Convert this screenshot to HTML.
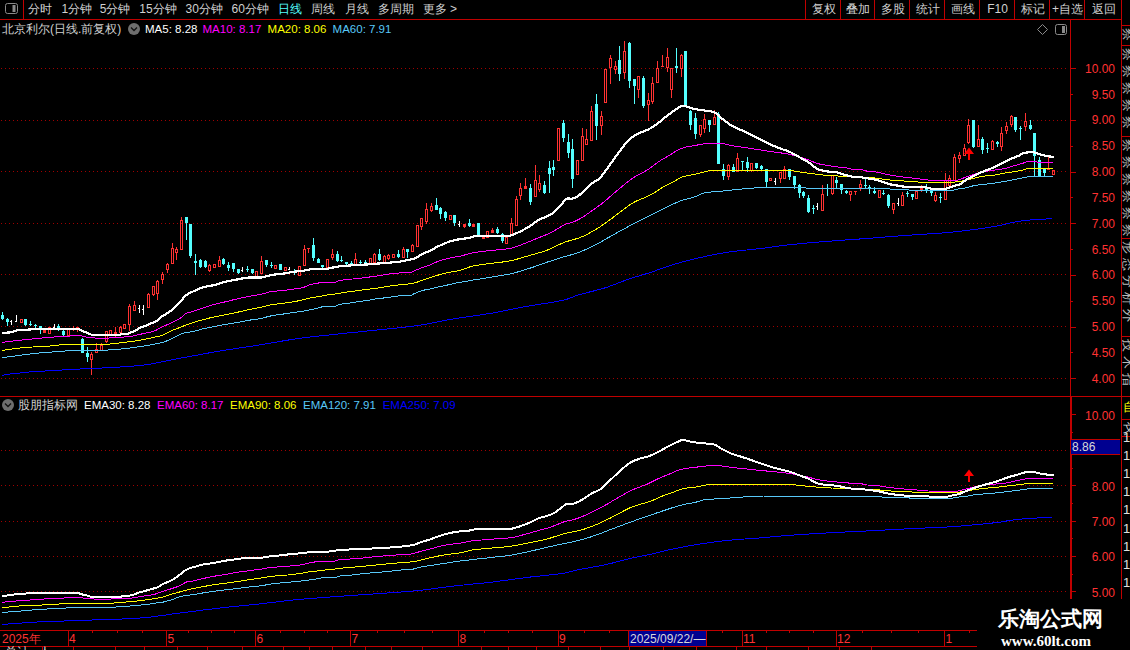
<!DOCTYPE html>
<html><head><meta charset="utf-8">
<style>
html,body{margin:0;padding:0;background:#000;}
body{width:1130px;height:650px;position:relative;overflow:hidden;font-family:"Liberation Sans",sans-serif;color:#d8d8d8;}
svg{position:absolute;left:0;top:0;}
.t{position:absolute;white-space:nowrap;font-size:12px;line-height:14px;}
.tb{position:absolute;top:2px;white-space:nowrap;font-size:12px;line-height:14px;color:#d0d0d0;}
.ax{position:absolute;right:15px;font-size:12px;line-height:12px;color:#ff3232;text-align:right;}
.xl{position:absolute;top:632px;font-size:12px;line-height:14px;color:#ff3232;}
</style></head>
<body>
<svg width="1130" height="650" viewBox="0 0 1130 650" shape-rendering="auto">
<g shape-rendering="crispEdges" fill="none" stroke="#c00000" stroke-width="1">
<path d="M0 19.5H1121M23.5 0V19M805.5 0V19M840.5 0V19M874.5 0V19M909.5 0V19M944.5 0V19M979.5 0V19M1014.5 0V19M1049.5 0V19M1084.5 0V19"/>
<path d="M1121.5 0V599M1070.5 19V599M0 396.5H1130M1071.5 397V599M628.5 631V646M706.5 631V646"/>
<path d="M1121 25.5H1130M1121 45.5H1130M1121 136.5H1130M1121 238.5H1130M1121 336.5H1130M1121 419.5H1130M1121 436.5H1130"/>
</g>
<path d="M1 68.5H1066" stroke="#a00000" stroke-dasharray="1 3"/>
<path d="M1 120.5H1066" stroke="#a00000" stroke-dasharray="1 3"/>
<path d="M1 171.5H1066" stroke="#a00000" stroke-dasharray="1 3"/>
<path d="M1 223.5H1066" stroke="#a00000" stroke-dasharray="1 3"/>
<path d="M1 274.5H1066" stroke="#a00000" stroke-dasharray="1 3"/>
<path d="M1 326.5H1066" stroke="#a00000" stroke-dasharray="1 3"/>
<path d="M1 378.5H1066" stroke="#a00000" stroke-dasharray="1 3"/>
<g stroke-width="1" shape-rendering="crispEdges"><path d="M2.5 312.0V320.0" stroke="#54ffff"/>
<rect x="1.0" y="314.5" width="3" height="4.0" fill="#54ffff"/>
<path d="M7.5 317.5V326.0" stroke="#54ffff"/>
<rect x="6.0" y="319.0" width="3" height="3.0" fill="#54ffff"/>
<path d="M11.5 320.0V325.0M10.0 321.5H11.5" stroke="#ffffff"/>
<path d="M16.5 315.0V322.0M15.0 321.5H16.5" stroke="#ffffff"/>
<path d="M21.5 319.0V319.0M21.5 322.0V323.0" stroke="#ff3232"/>
<rect x="20.5" y="319.0" width="2" height="3.0" fill="none" stroke="#ff3232"/>
<path d="M25.5 319.0V326.0" stroke="#54ffff"/>
<rect x="24.0" y="319.0" width="3" height="5.5" fill="#54ffff"/>
<path d="M30.5 321.0V326.0" stroke="#54ffff"/>
<rect x="29.0" y="323.5" width="3" height="1.0" fill="#54ffff"/>
<path d="M35.5 324.0V328.0" stroke="#54ffff"/>
<rect x="34.0" y="325.0" width="3" height="1.0" fill="#54ffff"/>
<path d="M40.5 326.0V333.5" stroke="#54ffff"/>
<rect x="39.0" y="326.0" width="3" height="3.0" fill="#54ffff"/>
<path d="M44.5 330.0V330.0M44.5 332.0V333.0" stroke="#ff3232"/>
<rect x="43.0" y="330.0" width="3" height="2.5" fill="#ff3232"/>

<rect x="48.5" y="327.0" width="2" height="6.0" fill="none" stroke="#ff3232"/>
<path d="M54.5 324.0V328.0M53.0 327.5H54.5" stroke="#ffffff"/>
<path d="M58.5 324.0V331.0" stroke="#54ffff"/>
<rect x="57.0" y="326.0" width="3" height="4.0" fill="#54ffff"/>
<path d="M63.5 329.7V336.0" stroke="#54ffff"/>
<rect x="62.0" y="330.6" width="3" height="4.6" fill="#54ffff"/>

<rect x="67.5" y="329.7" width="2" height="6.0" fill="none" stroke="#ff3232"/>
<path d="M73.5 326.0V328.5M73.5 329.5V331.0" stroke="#ff3232"/>
<path d="M72.0 329.0H75.0" stroke="#ff3232"/>
<path d="M77.5 326.5V327.4M77.5 329.2V331.5" stroke="#ff3232"/>
<rect x="76.0" y="327.4" width="3" height="2.3" fill="#ff3232"/>
<path d="M82.5 338.0V352.8" stroke="#54ffff"/>
<rect x="81.0" y="339.0" width="3" height="13.8" fill="#54ffff"/>
<path d="M87.5 346.8V362.0" stroke="#54ffff"/>
<rect x="86.0" y="352.8" width="3" height="4.2" fill="#54ffff"/>
<path d="M91.5 351.9V354.2M91.5 359.7V374.9" stroke="#ff3232"/>
<rect x="90.5" y="354.2" width="2" height="5.5" fill="none" stroke="#ff3232"/>
<path d="M96.5 343.0V349.0M96.5 352.8V352.8" stroke="#ff3232"/>
<rect x="95.5" y="349.0" width="2" height="3.8" fill="none" stroke="#ff3232"/>
<path d="M101.5 342.6V345.0M101.5 350.0V350.7" stroke="#ff3232"/>
<rect x="100.5" y="345.0" width="2" height="5.0" fill="none" stroke="#ff3232"/>
<path d="M106.5 331.0V331.0M106.5 341.5V343.0" stroke="#ff3232"/>
<rect x="105.5" y="331.0" width="2" height="10.5" fill="none" stroke="#ff3232"/>

<rect x="109.5" y="330.5" width="2" height="4.0" fill="none" stroke="#ff3232"/>
<path d="M115.5 327.0V332.0M115.5 334.5V337.0" stroke="#ff3232"/>
<rect x="114.0" y="332.0" width="3" height="3.0" fill="#ff3232"/>
<path d="M120.5 326.0V327.0M120.5 332.0V332.0" stroke="#ff3232"/>
<rect x="119.5" y="327.0" width="2" height="5.0" fill="none" stroke="#ff3232"/>

<rect x="123.5" y="324.6" width="2" height="3.4" fill="none" stroke="#ff3232"/>
<path d="M129.5 304.0V306.0M129.5 324.0V331.0" stroke="#ff3232"/>
<rect x="128.5" y="306.0" width="2" height="18.0" fill="none" stroke="#ff3232"/>
<path d="M134.5 301.0V305.7M134.5 310.3V311.0" stroke="#ff3232"/>
<rect x="133.5" y="305.7" width="2" height="4.6" fill="none" stroke="#ff3232"/>
<path d="M139.5 305.0V312.6M138.0 308.5H139.5" stroke="#ffffff"/>
<path d="M143.5 304.5V315.0M142.0 309.5H143.5" stroke="#ffffff"/>
<path d="M148.5 293.0V294.8M148.5 307.3V307.3" stroke="#ff3232"/>
<rect x="147.5" y="294.8" width="2" height="12.5" fill="none" stroke="#ff3232"/>
<path d="M153.5 285.6V286.8M153.5 294.8V295.7" stroke="#ff3232"/>
<rect x="152.5" y="286.8" width="2" height="8.0" fill="none" stroke="#ff3232"/>
<path d="M157.5 280.0V281.5M157.5 293.0V299.5" stroke="#ff3232"/>
<rect x="156.5" y="281.5" width="2" height="11.5" fill="none" stroke="#ff3232"/>
<path d="M162.5 272.0V274.0M162.5 279.0V284.0" stroke="#ff3232"/>
<rect x="161.5" y="274.0" width="2" height="5.0" fill="none" stroke="#ff3232"/>
<path d="M167.5 263.0V264.6M167.5 269.5V272.7" stroke="#ff3232"/>
<rect x="166.5" y="264.6" width="2" height="4.9" fill="none" stroke="#ff3232"/>
<path d="M172.5 243.0V248.0M172.5 263.0V263.0" stroke="#ff3232"/>
<rect x="171.5" y="248.0" width="2" height="15.0" fill="none" stroke="#ff3232"/>
<path d="M176.5 247.0V249.0M176.5 252.6V259.6" stroke="#ff3232"/>
<rect x="175.5" y="249.0" width="2" height="3.6" fill="none" stroke="#ff3232"/>
<path d="M181.5 217.0V220.4M181.5 249.0V249.0" stroke="#ff3232"/>
<rect x="180.5" y="220.4" width="2" height="28.6" fill="none" stroke="#ff3232"/>
<path d="M186.5 217.4V240.0" stroke="#54ffff"/>
<rect x="185.0" y="217.4" width="3" height="5.3" fill="#54ffff"/>
<path d="M190.5 224.0V258.0" stroke="#54ffff"/>
<rect x="189.0" y="224.0" width="3" height="32.0" fill="#54ffff"/>
<path d="M195.5 254.0V274.5" stroke="#54ffff"/>
<rect x="194.0" y="261.0" width="3" height="2.0" fill="#54ffff"/>
<path d="M200.5 259.0V267.6" stroke="#54ffff"/>
<rect x="199.0" y="260.0" width="3" height="7.0" fill="#54ffff"/>
<path d="M205.5 260.0V268.0" stroke="#54ffff"/>
<rect x="204.0" y="261.0" width="3" height="6.0" fill="#54ffff"/>
<path d="M209.5 264.0V265.0M209.5 270.0V272.0" stroke="#ff3232"/>
<rect x="208.5" y="265.0" width="2" height="5.0" fill="none" stroke="#ff3232"/>

<rect x="213.5" y="264.0" width="2" height="3.6" fill="none" stroke="#ff3232"/>
<path d="M219.5 256.0V260.0M219.5 266.0V267.0" stroke="#ff3232"/>
<rect x="218.5" y="260.0" width="2" height="6.0" fill="none" stroke="#ff3232"/>
<path d="M223.5 258.0V265.0" stroke="#54ffff"/>
<rect x="222.0" y="259.0" width="3" height="5.4" fill="#54ffff"/>
<path d="M228.5 262.0V271.0" stroke="#54ffff"/>
<rect x="227.0" y="265.0" width="3" height="3.0" fill="#54ffff"/>
<path d="M233.5 263.0V272.0" stroke="#54ffff"/>
<rect x="232.0" y="263.0" width="3" height="6.0" fill="#54ffff"/>
<path d="M238.5 269.0V274.0" stroke="#54ffff"/>
<rect x="237.0" y="269.0" width="3" height="4.0" fill="#54ffff"/>
<path d="M242.5 267.0V272.0M241.0 270.5H242.5" stroke="#ffffff"/>
<path d="M247.5 266.0V272.0" stroke="#54ffff"/>
<rect x="246.0" y="269.0" width="3" height="1.0" fill="#54ffff"/>
<path d="M252.5 269.0V274.0" stroke="#54ffff"/>
<rect x="251.0" y="269.0" width="3" height="4.0" fill="#54ffff"/>

<rect x="255.5" y="271.0" width="2" height="6.0" fill="none" stroke="#ff3232"/>
<path d="M261.5 256.0V261.0M261.5 273.0V273.0" stroke="#ff3232"/>
<rect x="260.5" y="261.0" width="2" height="12.0" fill="none" stroke="#ff3232"/>
<path d="M266.5 260.0V267.0" stroke="#54ffff"/>
<rect x="265.0" y="260.0" width="3" height="5.0" fill="#54ffff"/>
<path d="M271.5 262.0V268.0" stroke="#54ffff"/>
<rect x="270.0" y="264.5" width="3" height="1.0" fill="#54ffff"/>

<rect x="274.5" y="265.0" width="2" height="3.0" fill="none" stroke="#ff3232"/>
<path d="M280.5 264.0V270.0" stroke="#54ffff"/>
<rect x="279.0" y="264.0" width="3" height="6.0" fill="#54ffff"/>

<rect x="284.5" y="267.0" width="2" height="3.0" fill="none" stroke="#ff3232"/>
<path d="M289.5 267.0V270.0M288.0 269.5H289.5" stroke="#ffffff"/>
<path d="M294.5 269.0V275.0" stroke="#54ffff"/>
<rect x="293.0" y="270.5" width="3" height="1.0" fill="#54ffff"/>

<rect x="298.5" y="266.0" width="2" height="9.0" fill="none" stroke="#ff3232"/>
<path d="M304.5 245.0V249.0M304.5 265.0V266.0" stroke="#ff3232"/>
<rect x="303.5" y="249.0" width="2" height="16.0" fill="none" stroke="#ff3232"/>
<path d="M308.5 248.0V248.0M308.5 249.0V253.0" stroke="#ff3232"/>
<path d="M307.0 248.5H310.0" stroke="#ff3232"/>
<path d="M313.5 238.0V261.0" stroke="#54ffff"/>
<rect x="312.0" y="245.0" width="3" height="13.0" fill="#54ffff"/>
<path d="M318.5 258.0V263.0" stroke="#54ffff"/>
<rect x="317.0" y="258.7" width="3" height="4.3" fill="#54ffff"/>
<path d="M322.5 265.0V270.0" stroke="#54ffff"/>
<rect x="321.0" y="265.0" width="3" height="2.3" fill="#54ffff"/>

<rect x="326.5" y="259.3" width="2" height="8.0" fill="none" stroke="#ff3232"/>
<path d="M332.5 249.4V254.4M332.5 257.6V259.7" stroke="#ff3232"/>
<rect x="331.5" y="254.4" width="2" height="3.2" fill="none" stroke="#ff3232"/>
<path d="M337.5 251.0V262.0" stroke="#54ffff"/>
<rect x="336.0" y="254.4" width="3" height="6.4" fill="#54ffff"/>
<path d="M341.5 256.0V262.0" stroke="#54ffff"/>
<rect x="340.0" y="259.5" width="3" height="1.5" fill="#54ffff"/>
<path d="M346.5 261.5V265.0" stroke="#54ffff"/>
<rect x="345.0" y="261.5" width="3" height="2.5" fill="#54ffff"/>
<path d="M351.5 261.0V265.0" stroke="#54ffff"/>
<rect x="350.0" y="262.5" width="3" height="1.0" fill="#54ffff"/>
<path d="M355.5 253.0V259.7M355.5 264.7V264.7" stroke="#ff3232"/>
<rect x="354.5" y="259.7" width="2" height="5.0" fill="none" stroke="#ff3232"/>
<path d="M360.5 259.7V264.0" stroke="#54ffff"/>
<rect x="359.0" y="261.5" width="3" height="1.0" fill="#54ffff"/>
<path d="M365.5 260.0V264.0" stroke="#54ffff"/>
<rect x="364.0" y="262.0" width="3" height="1.0" fill="#54ffff"/>

<rect x="369.5" y="258.7" width="2" height="4.3" fill="none" stroke="#ff3232"/>
<path d="M374.5 253.3V254.4M374.5 262.0V262.0" stroke="#ff3232"/>
<rect x="373.5" y="254.4" width="2" height="7.6" fill="none" stroke="#ff3232"/>
<path d="M379.5 249.0V261.0" stroke="#54ffff"/>
<rect x="378.0" y="254.4" width="3" height="5.3" fill="#54ffff"/>
<path d="M384.5 255.4V256.5M384.5 262.0V263.0" stroke="#ff3232"/>
<rect x="383.5" y="256.5" width="2" height="5.5" fill="none" stroke="#ff3232"/>
<path d="M388.5 254.4V255.4M388.5 258.7V259.7" stroke="#ff3232"/>
<rect x="387.5" y="255.4" width="2" height="3.3" fill="none" stroke="#ff3232"/>

<rect x="392.5" y="254.0" width="2" height="3.6" fill="none" stroke="#ff3232"/>
<path d="M398.5 250.0V257.6" stroke="#54ffff"/>
<rect x="397.0" y="254.4" width="3" height="2.1" fill="#54ffff"/>
<path d="M403.5 246.8V249.0M403.5 257.0V257.6" stroke="#ff3232"/>
<rect x="402.5" y="249.0" width="2" height="8.0" fill="none" stroke="#ff3232"/>
<path d="M407.5 248.5V257.6" stroke="#54ffff"/>
<rect x="406.0" y="248.5" width="3" height="3.7" fill="#54ffff"/>
<path d="M412.5 243.6V245.0M412.5 251.6V252.2" stroke="#ff3232"/>
<rect x="411.5" y="245.0" width="2" height="6.6" fill="none" stroke="#ff3232"/>

<rect x="416.5" y="225.7" width="2" height="21.1" fill="none" stroke="#ff3232"/>
<path d="M421.5 217.7V218.8M421.5 226.3V229.6" stroke="#ff3232"/>
<rect x="420.5" y="218.8" width="2" height="7.5" fill="none" stroke="#ff3232"/>
<path d="M426.5 202.6V209.0M426.5 221.0V224.0" stroke="#ff3232"/>
<rect x="425.5" y="209.0" width="2" height="12.0" fill="none" stroke="#ff3232"/>
<path d="M431.5 203.0V206.0M431.5 210.0V212.0" stroke="#ff3232"/>
<rect x="430.5" y="206.0" width="2" height="4.0" fill="none" stroke="#ff3232"/>
<path d="M436.5 198.0V210.0" stroke="#54ffff"/>
<rect x="435.0" y="205.0" width="3" height="5.0" fill="#54ffff"/>
<path d="M440.5 207.0V219.0" stroke="#54ffff"/>
<rect x="439.0" y="208.0" width="3" height="5.6" fill="#54ffff"/>
<path d="M445.5 211.0V221.0" stroke="#54ffff"/>
<rect x="444.0" y="212.4" width="3" height="5.6" fill="#54ffff"/>

<rect x="449.5" y="215.6" width="2" height="3.4" fill="none" stroke="#ff3232"/>
<path d="M454.5 215.0V226.0" stroke="#54ffff"/>
<rect x="453.0" y="215.0" width="3" height="8.0" fill="#54ffff"/>
<path d="M459.5 221.0V227.0M458.0 224.5H459.5" stroke="#ffffff"/>
<path d="M464.5 224.0V224.0M464.5 226.0V228.0" stroke="#ff3232"/>
<rect x="463.0" y="224.0" width="3" height="2.5" fill="#ff3232"/>
<path d="M469.5 219.0V227.0" stroke="#54ffff"/>
<rect x="468.0" y="223.0" width="3" height="3.0" fill="#54ffff"/>

<rect x="472.0" y="224.0" width="3" height="3.1" fill="#ff3232"/>
<path d="M478.5 223.0V235.0" stroke="#54ffff"/>
<rect x="477.0" y="223.0" width="3" height="12.0" fill="#54ffff"/>

<rect x="482.0" y="236.0" width="3" height="2.5" fill="#ff3232"/>

<rect x="486.5" y="231.0" width="2" height="6.0" fill="none" stroke="#ff3232"/>
<path d="M492.5 228.0V230.0M492.5 232.0V232.0" stroke="#ff3232"/>
<rect x="491.0" y="230.0" width="3" height="2.5" fill="#ff3232"/>
<path d="M497.5 227.0V234.0" stroke="#54ffff"/>
<rect x="496.0" y="229.0" width="3" height="4.0" fill="#54ffff"/>
<path d="M502.5 233.0V243.0" stroke="#54ffff"/>
<rect x="501.0" y="234.0" width="3" height="7.0" fill="#54ffff"/>

<rect x="505.5" y="237.0" width="2" height="6.0" fill="none" stroke="#ff3232"/>
<path d="M511.5 218.0V223.0M511.5 234.0V234.0" stroke="#ff3232"/>
<rect x="510.5" y="223.0" width="2" height="11.0" fill="none" stroke="#ff3232"/>
<path d="M516.5 196.0V199.0M516.5 225.0V226.0" stroke="#ff3232"/>
<rect x="515.5" y="199.0" width="2" height="26.0" fill="none" stroke="#ff3232"/>
<path d="M520.5 183.0V188.0M520.5 195.0V200.0" stroke="#ff3232"/>
<rect x="519.5" y="188.0" width="2" height="7.0" fill="none" stroke="#ff3232"/>
<path d="M525.5 178.0V186.0M525.5 188.4V188.4" stroke="#ff3232"/>
<rect x="524.0" y="186.0" width="3" height="2.9" fill="#ff3232"/>
<path d="M530.5 184.0V205.0" stroke="#54ffff"/>
<rect x="529.0" y="188.0" width="3" height="14.0" fill="#54ffff"/>
<path d="M535.5 165.0V180.0M535.5 196.0V196.0" stroke="#ff3232"/>
<rect x="534.5" y="180.0" width="2" height="16.0" fill="none" stroke="#ff3232"/>
<path d="M539.5 175.0V183.0M539.5 189.0V192.0" stroke="#ff3232"/>
<rect x="538.5" y="183.0" width="2" height="6.0" fill="none" stroke="#ff3232"/>
<path d="M544.5 181.0V194.0" stroke="#54ffff"/>
<rect x="543.0" y="185.0" width="3" height="8.0" fill="#54ffff"/>
<path d="M549.5 161.0V193.0" stroke="#54ffff"/>
<rect x="548.0" y="168.0" width="3" height="6.0" fill="#54ffff"/>
<path d="M553.5 160.0V176.0" stroke="#54ffff"/>
<rect x="552.0" y="167.0" width="3" height="3.0" fill="#54ffff"/>

<rect x="557.5" y="128.0" width="2" height="32.0" fill="none" stroke="#ff3232"/>
<path d="M563.5 120.0V142.0" stroke="#54ffff"/>
<rect x="562.0" y="123.0" width="3" height="15.0" fill="#54ffff"/>
<path d="M568.5 134.0V158.0" stroke="#54ffff"/>
<rect x="567.0" y="142.0" width="3" height="11.0" fill="#54ffff"/>
<path d="M572.5 139.0V188.0" stroke="#54ffff"/>
<rect x="571.0" y="149.0" width="3" height="30.0" fill="#54ffff"/>
<path d="M577.5 160.0V160.0M577.5 174.0V175.0" stroke="#ff3232"/>
<rect x="576.5" y="160.0" width="2" height="14.0" fill="none" stroke="#ff3232"/>
<path d="M582.5 128.0V136.0M582.5 160.0V160.0" stroke="#ff3232"/>
<rect x="581.5" y="136.0" width="2" height="24.0" fill="none" stroke="#ff3232"/>
<path d="M586.5 129.0V139.0M586.5 144.0V145.0" stroke="#ff3232"/>
<rect x="585.5" y="139.0" width="2" height="5.0" fill="none" stroke="#ff3232"/>
<path d="M591.5 106.0V111.0M591.5 140.0V140.0" stroke="#ff3232"/>
<rect x="590.5" y="111.0" width="2" height="29.0" fill="none" stroke="#ff3232"/>
<path d="M596.5 94.0V140.0" stroke="#54ffff"/>
<rect x="595.0" y="104.0" width="3" height="22.4" fill="#54ffff"/>
<path d="M601.5 111.0V116.0M601.5 125.6V135.0" stroke="#ff3232"/>
<rect x="600.5" y="116.0" width="2" height="9.6" fill="none" stroke="#ff3232"/>

<rect x="604.5" y="69.0" width="2" height="33.7" fill="none" stroke="#ff3232"/>
<path d="M610.5 55.0V58.7M610.5 67.0V84.0" stroke="#ff3232"/>
<rect x="609.5" y="58.7" width="2" height="8.3" fill="none" stroke="#ff3232"/>
<path d="M615.5 61.0V66.0M615.5 69.0V74.0" stroke="#ff3232"/>
<rect x="614.5" y="66.0" width="2" height="3.0" fill="none" stroke="#ff3232"/>
<path d="M619.5 46.0V80.7" stroke="#54ffff"/>
<rect x="618.0" y="60.0" width="3" height="14.0" fill="#54ffff"/>
<path d="M624.5 41.0V51.0M624.5 72.0V79.0" stroke="#ff3232"/>
<rect x="623.5" y="51.0" width="2" height="21.0" fill="none" stroke="#ff3232"/>
<path d="M629.5 41.8V87.5" stroke="#54ffff"/>
<rect x="628.0" y="42.6" width="3" height="38.1" fill="#54ffff"/>
<path d="M634.5 79.0V104.4" stroke="#54ffff"/>
<rect x="633.0" y="79.0" width="3" height="6.8" fill="#54ffff"/>
<path d="M638.5 76.5V76.5M638.5 89.0V97.6" stroke="#ff3232"/>
<rect x="637.5" y="76.5" width="2" height="12.5" fill="none" stroke="#ff3232"/>
<path d="M643.5 75.6V107.8" stroke="#54ffff"/>
<rect x="642.0" y="78.0" width="3" height="28.0" fill="#54ffff"/>
<path d="M648.5 93.4V100.0M648.5 104.4V120.5" stroke="#ff3232"/>
<rect x="647.5" y="100.0" width="2" height="4.4" fill="none" stroke="#ff3232"/>
<path d="M652.5 77.0V83.0M652.5 101.0V103.6" stroke="#ff3232"/>
<rect x="651.5" y="83.0" width="2" height="18.0" fill="none" stroke="#ff3232"/>
<path d="M657.5 61.0V68.0M657.5 82.4V82.4" stroke="#ff3232"/>
<rect x="656.5" y="68.0" width="2" height="14.4" fill="none" stroke="#ff3232"/>
<path d="M662.5 55.0V65.5M662.5 66.5V66.5" stroke="#ff3232"/>
<path d="M661.0 66.0H664.0" stroke="#ff3232"/>
<path d="M667.5 47.7V57.8M667.5 67.0V72.0" stroke="#ff3232"/>
<rect x="666.5" y="57.8" width="2" height="9.2" fill="none" stroke="#ff3232"/>
<path d="M671.5 68.0V68.8M671.5 89.0V97.6" stroke="#ff3232"/>
<rect x="670.5" y="68.8" width="2" height="20.2" fill="none" stroke="#ff3232"/>
<path d="M676.5 47.7V73.0" stroke="#54ffff"/>
<rect x="675.0" y="65.5" width="3" height="2.5" fill="#54ffff"/>
<path d="M681.5 53.6V55.0M681.5 68.0V77.3" stroke="#ff3232"/>
<rect x="680.5" y="55.0" width="2" height="13.0" fill="none" stroke="#ff3232"/>
<path d="M685.5 51.0V105.2" stroke="#54ffff"/>
<rect x="684.0" y="51.0" width="3" height="54.2" fill="#54ffff"/>
<path d="M690.5 109.5V130.0" stroke="#54ffff"/>
<rect x="689.0" y="110.7" width="3" height="14.3" fill="#54ffff"/>
<path d="M695.5 113.0V139.0" stroke="#54ffff"/>
<rect x="694.0" y="118.0" width="3" height="15.7" fill="#54ffff"/>
<path d="M700.5 124.7V125.4M700.5 134.7V137.4" stroke="#ff3232"/>
<rect x="699.5" y="125.4" width="2" height="9.3" fill="none" stroke="#ff3232"/>
<path d="M704.5 113.5V119.0M704.5 128.2V132.8" stroke="#ff3232"/>
<rect x="703.5" y="119.0" width="2" height="9.2" fill="none" stroke="#ff3232"/>
<path d="M709.5 120.0V131.9" stroke="#54ffff"/>
<rect x="708.0" y="120.0" width="3" height="5.4" fill="#54ffff"/>
<path d="M714.5 110.0V117.0M714.5 124.5V124.5" stroke="#ff3232"/>
<rect x="713.5" y="117.0" width="2" height="7.5" fill="none" stroke="#ff3232"/>
<path d="M718.5 112.0V164.2" stroke="#54ffff"/>
<rect x="717.0" y="113.5" width="3" height="50.7" fill="#54ffff"/>
<path d="M723.5 164.2V180.0" stroke="#54ffff"/>
<rect x="722.0" y="168.8" width="3" height="7.4" fill="#54ffff"/>
<path d="M728.5 164.0V165.0M728.5 176.2V180.0" stroke="#ff3232"/>
<rect x="727.5" y="165.0" width="2" height="11.2" fill="none" stroke="#ff3232"/>
<path d="M733.5 164.0V172.0" stroke="#54ffff"/>
<rect x="732.0" y="167.0" width="3" height="4.6" fill="#54ffff"/>
<path d="M737.5 153.0V158.7M737.5 171.6V171.6" stroke="#ff3232"/>
<rect x="736.5" y="158.7" width="2" height="12.9" fill="none" stroke="#ff3232"/>
<path d="M742.5 160.5V169.7" stroke="#54ffff"/>
<rect x="741.0" y="160.5" width="3" height="1.0" fill="#54ffff"/>
<path d="M747.5 156.8V171.6" stroke="#54ffff"/>
<rect x="746.0" y="162.3" width="3" height="5.6" fill="#54ffff"/>
<path d="M751.5 162.5V163.3M751.5 170.6V172.0" stroke="#ff3232"/>
<rect x="750.5" y="163.3" width="2" height="7.3" fill="none" stroke="#ff3232"/>
<path d="M756.5 163.0V169.0" stroke="#54ffff"/>
<rect x="755.0" y="163.3" width="3" height="4.6" fill="#54ffff"/>
<path d="M761.5 165.0V170.0" stroke="#54ffff"/>
<rect x="760.0" y="166.0" width="3" height="2.8" fill="#54ffff"/>
<path d="M766.5 168.8V188.0" stroke="#54ffff"/>
<rect x="765.0" y="168.8" width="3" height="12.9" fill="#54ffff"/>

<rect x="769.5" y="178.0" width="2" height="2.8" fill="none" stroke="#ff3232"/>
<path d="M775.5 178.0V185.4M774.0 181.5H775.5" stroke="#ffffff"/>
<path d="M780.5 172.0V172.5M780.5 178.0V183.0" stroke="#ff3232"/>
<rect x="779.5" y="172.5" width="2" height="5.5" fill="none" stroke="#ff3232"/>
<path d="M784.5 166.0V169.7M784.5 178.0V178.0" stroke="#ff3232"/>
<rect x="783.5" y="169.7" width="2" height="8.3" fill="none" stroke="#ff3232"/>
<path d="M789.5 168.8V180.0" stroke="#54ffff"/>
<rect x="788.0" y="168.8" width="3" height="8.2" fill="#54ffff"/>
<path d="M794.5 176.0V189.0" stroke="#54ffff"/>
<rect x="793.0" y="176.2" width="3" height="8.3" fill="#54ffff"/>
<path d="M799.5 184.0V198.0" stroke="#54ffff"/>
<rect x="798.0" y="184.5" width="3" height="8.3" fill="#54ffff"/>
<path d="M803.5 191.0V198.0" stroke="#54ffff"/>
<rect x="802.0" y="192.0" width="3" height="4.0" fill="#54ffff"/>
<path d="M808.5 195.0V213.0" stroke="#54ffff"/>
<rect x="807.0" y="198.0" width="3" height="14.0" fill="#54ffff"/>
<path d="M813.5 205.0V214.0" stroke="#54ffff"/>
<rect x="812.0" y="207.5" width="3" height="1.0" fill="#54ffff"/>
<path d="M817.5 203.0V210.0M816.0 206.5H817.5" stroke="#ffffff"/>
<path d="M822.5 184.6V194.0M822.5 210.0V210.0" stroke="#ff3232"/>
<rect x="821.5" y="194.0" width="2" height="16.0" fill="none" stroke="#ff3232"/>
<path d="M827.5 184.0V196.0" stroke="#54ffff"/>
<rect x="826.0" y="188.0" width="3" height="1.0" fill="#54ffff"/>
<path d="M832.5 175.4V175.4M832.5 193.0V194.6" stroke="#ff3232"/>
<rect x="831.5" y="175.4" width="2" height="17.6" fill="none" stroke="#ff3232"/>
<path d="M836.5 177.0V189.0" stroke="#54ffff"/>
<rect x="835.0" y="180.0" width="3" height="3.0" fill="#54ffff"/>
<path d="M841.5 184.0V194.0" stroke="#54ffff"/>
<rect x="840.0" y="184.0" width="3" height="6.0" fill="#54ffff"/>
<path d="M846.5 189.5V193.5" stroke="#54ffff"/>
<rect x="845.0" y="191.0" width="3" height="2.0" fill="#54ffff"/>
<path d="M850.5 191.0V191.0M850.5 194.0V201.0" stroke="#ff3232"/>
<rect x="849.5" y="191.0" width="2" height="3.0" fill="none" stroke="#ff3232"/>
<path d="M855.5 190.5V190.5M855.5 191.5V194.6" stroke="#ff3232"/>
<path d="M854.0 191.0H857.0" stroke="#ff3232"/>
<path d="M860.5 180.0V184.6M860.5 187.7V191.0" stroke="#ff3232"/>
<rect x="859.5" y="184.6" width="2" height="3.1" fill="none" stroke="#ff3232"/>
<path d="M865.5 178.5V187.7" stroke="#54ffff"/>
<rect x="864.0" y="185.0" width="3" height="1.0" fill="#54ffff"/>
<path d="M869.5 184.6V194.0" stroke="#54ffff"/>
<rect x="868.0" y="187.0" width="3" height="1.0" fill="#54ffff"/>
<path d="M874.5 187.0V194.0" stroke="#54ffff"/>
<rect x="873.0" y="191.0" width="3" height="2.0" fill="#54ffff"/>

<rect x="878.5" y="190.0" width="2" height="7.0" fill="none" stroke="#ff3232"/>
<path d="M883.5 190.0V195.4" stroke="#54ffff"/>
<rect x="882.0" y="192.5" width="3" height="1.0" fill="#54ffff"/>
<path d="M888.5 194.0V207.7" stroke="#54ffff"/>
<rect x="887.0" y="194.6" width="3" height="11.4" fill="#54ffff"/>
<path d="M893.5 203.0V203.5M893.5 209.0V214.0" stroke="#ff3232"/>
<rect x="892.5" y="203.5" width="2" height="5.5" fill="none" stroke="#ff3232"/>
<path d="M898.5 197.7V206.0M897.0 203.5H898.5" stroke="#ffffff"/>
<path d="M902.5 192.0V195.0M902.5 205.4V205.4" stroke="#ff3232"/>
<rect x="901.5" y="195.0" width="2" height="10.4" fill="none" stroke="#ff3232"/>
<path d="M907.5 191.0V197.0" stroke="#54ffff"/>
<rect x="906.0" y="192.5" width="3" height="1.0" fill="#54ffff"/>
<path d="M912.5 194.0V200.0" stroke="#54ffff"/>
<rect x="911.0" y="194.0" width="3" height="3.0" fill="#54ffff"/>

<rect x="915.5" y="191.0" width="2" height="7.5" fill="none" stroke="#ff3232"/>
<path d="M921.5 184.6V187.7M921.5 190.0V191.5" stroke="#ff3232"/>
<rect x="920.0" y="187.7" width="3" height="2.8" fill="#ff3232"/>
<path d="M926.5 184.0V193.0" stroke="#54ffff"/>
<rect x="925.0" y="187.7" width="3" height="3.1" fill="#54ffff"/>
<path d="M931.5 189.0V196.0" stroke="#54ffff"/>
<rect x="930.0" y="189.0" width="3" height="4.0" fill="#54ffff"/>
<path d="M935.5 192.0V195.4M935.5 200.0V201.5" stroke="#ff3232"/>
<rect x="934.5" y="195.4" width="2" height="4.6" fill="none" stroke="#ff3232"/>
<path d="M940.5 193.0V203.0" stroke="#54ffff"/>
<rect x="939.0" y="196.5" width="3" height="1.0" fill="#54ffff"/>
<path d="M945.5 172.7V180.4M945.5 199.6V199.6" stroke="#ff3232"/>
<rect x="944.5" y="180.4" width="2" height="19.2" fill="none" stroke="#ff3232"/>
<path d="M949.5 175.0V178.0M949.5 185.8V185.8" stroke="#ff3232"/>
<rect x="948.5" y="178.0" width="2" height="7.8" fill="none" stroke="#ff3232"/>
<path d="M954.5 153.5V157.3M954.5 180.4V180.4" stroke="#ff3232"/>
<rect x="953.5" y="157.3" width="2" height="23.1" fill="none" stroke="#ff3232"/>
<path d="M959.5 152.0V155.8M959.5 158.8V162.7" stroke="#ff3232"/>
<rect x="958.5" y="155.8" width="2" height="3.0" fill="none" stroke="#ff3232"/>
<path d="M964.5 144.0V148.0M964.5 155.0V155.0" stroke="#ff3232"/>
<rect x="963.5" y="148.0" width="2" height="7.0" fill="none" stroke="#ff3232"/>
<path d="M968.5 118.8V125.0M968.5 142.0V143.5" stroke="#ff3232"/>
<rect x="967.5" y="125.0" width="2" height="17.0" fill="none" stroke="#ff3232"/>
<path d="M973.5 120.0V148.0" stroke="#54ffff"/>
<rect x="972.0" y="120.0" width="3" height="26.5" fill="#54ffff"/>
<path d="M978.5 125.0V139.0M978.5 146.5V146.5" stroke="#ff3232"/>
<rect x="977.5" y="139.0" width="2" height="7.5" fill="none" stroke="#ff3232"/>
<path d="M982.5 137.0V154.2" stroke="#54ffff"/>
<rect x="981.0" y="138.5" width="3" height="11.1" fill="#54ffff"/>
<path d="M987.5 142.7V152.7" stroke="#54ffff"/>
<rect x="986.0" y="147.5" width="3" height="1.0" fill="#54ffff"/>
<path d="M992.5 139.6V141.0M992.5 149.0V149.6" stroke="#ff3232"/>
<rect x="991.5" y="141.0" width="2" height="8.0" fill="none" stroke="#ff3232"/>
<path d="M997.5 141.0V147.3" stroke="#54ffff"/>
<rect x="996.0" y="142.0" width="3" height="1.5" fill="#54ffff"/>
<path d="M1001.5 127.0V133.0M1001.5 146.5V151.0" stroke="#ff3232"/>
<rect x="1000.5" y="133.0" width="2" height="13.5" fill="none" stroke="#ff3232"/>
<path d="M1006.5 122.0V126.0M1006.5 130.4V133.5" stroke="#ff3232"/>
<rect x="1005.5" y="126.0" width="2" height="4.4" fill="none" stroke="#ff3232"/>
<path d="M1011.5 115.0V116.5M1011.5 124.7V127.0" stroke="#ff3232"/>
<rect x="1010.5" y="116.5" width="2" height="8.2" fill="none" stroke="#ff3232"/>
<path d="M1015.5 117.0V132.0" stroke="#54ffff"/>
<rect x="1014.0" y="117.0" width="3" height="12.6" fill="#54ffff"/>
<path d="M1020.5 125.8V139.6" stroke="#54ffff"/>
<rect x="1019.0" y="127.5" width="3" height="1.0" fill="#54ffff"/>
<path d="M1025.5 112.7V121.0M1025.5 126.5V131.0" stroke="#ff3232"/>
<rect x="1024.5" y="121.0" width="2" height="5.5" fill="none" stroke="#ff3232"/>
<path d="M1030.5 120.4V130.4" stroke="#54ffff"/>
<rect x="1029.0" y="125.0" width="3" height="3.8" fill="#54ffff"/>
<path d="M1034.5 132.7V175.8" stroke="#54ffff"/>
<rect x="1033.0" y="132.7" width="3" height="23.1" fill="#54ffff"/>
<path d="M1039.5 157.3V175.8" stroke="#54ffff"/>
<rect x="1038.0" y="159.6" width="3" height="16.2" fill="#54ffff"/>
<path d="M1044.5 168.0V177.3" stroke="#54ffff"/>
<rect x="1043.0" y="168.8" width="3" height="3.9" fill="#54ffff"/>
<path d="M1048.5 157.3V168.5M1048.5 169.6V169.6" stroke="#ff3232"/>
<path d="M1047.0 169.0H1050.0" stroke="#ff3232"/>

<rect x="1052.5" y="170.8" width="2" height="3.4" fill="none" stroke="#ff3232"/></g>
<path d="M2.0 375.5 L4.0 375.1 L6.0 374.7 L8.0 374.3 L10.0 374.0 L12.0 373.8 L14.0 373.6 L16.0 373.4 L18.0 373.2 L20.0 373.0 L21.9 372.8 L23.8 372.6 L25.6 372.4 L27.5 372.2 L29.4 372.0 L31.2 371.8 L33.1 371.6 L35.0 371.5 L37.0 371.4 L39.0 371.3 L41.0 371.2 L43.0 371.1 L45.0 371.0 L47.0 370.9 L49.0 370.8 L51.0 370.7 L53.0 370.6 L55.0 370.5 L56.9 370.4 L58.8 370.3 L60.6 370.1 L62.5 370.0 L64.4 369.9 L66.2 369.7 L68.1 369.6 L70.0 369.5 L72.0 369.4 L74.0 369.3 L76.0 369.2 L78.0 369.1 L80.0 369.0 L82.0 368.9 L84.0 368.8 L86.0 368.7 L88.0 368.6 L90.0 368.5 L92.0 368.4 L94.0 368.3 L96.0 368.3 L98.0 368.2 L100.0 368.1 L102.0 368.0 L104.0 367.9 L106.0 367.8 L108.0 367.7 L110.0 367.6 L111.9 367.5 L113.9 367.4 L115.9 367.3 L117.9 367.2 L119.9 367.0 L121.9 366.9 L123.9 366.8 L125.9 366.6 L127.9 366.5 L129.9 366.4 L131.8 366.2 L133.8 366.0 L135.8 365.9 L137.8 365.7 L139.8 365.5 L141.8 365.3 L143.8 365.1 L145.8 364.8 L147.8 364.5 L149.8 364.2 L151.7 363.8 L153.7 363.5 L155.7 363.1 L157.7 362.7 L159.7 362.3 L161.7 361.9 L163.7 361.5 L165.7 361.1 L167.7 360.7 L169.7 360.3 L171.6 359.8 L173.6 359.4 L175.6 359.0 L177.6 358.7 L179.6 358.3 L181.6 357.9 L183.6 357.6 L185.6 357.2 L187.6 356.8 L189.6 356.5 L191.6 356.1 L193.6 355.7 L195.6 355.4 L197.6 355.0 L199.6 354.6 L201.5 354.3 L203.5 353.9 L205.5 353.5 L207.5 353.2 L209.5 352.8 L211.5 352.5 L213.5 352.1 L215.5 351.8 L217.5 351.4 L219.5 351.1 L221.5 350.8 L223.5 350.5 L225.5 350.1 L227.5 349.8 L229.4 349.5 L231.4 349.2 L233.4 348.9 L235.4 348.6 L237.4 348.3 L239.4 348.0 L241.4 347.7 L243.4 347.4 L245.4 347.1 L247.4 346.8 L249.4 346.5 L251.3 346.2 L253.3 345.9 L255.3 345.6 L257.3 345.3 L259.3 345.0 L261.3 344.7 L263.3 344.3 L265.3 344.0 L267.3 343.7 L269.2 343.3 L271.2 343.0 L273.2 342.6 L275.2 342.3 L277.2 341.9 L279.2 341.6 L281.2 341.2 L283.2 340.9 L285.2 340.5 L287.2 340.2 L289.2 339.9 L291.1 339.6 L293.1 339.3 L295.1 339.0 L297.1 338.7 L299.1 338.4 L301.1 338.1 L303.1 337.9 L305.1 337.6 L307.1 337.4 L309.1 337.1 L311.0 336.9 L313.0 336.7 L315.0 336.5 L317.0 336.2 L319.0 336.0 L321.0 335.8 L323.0 335.6 L325.0 335.4 L327.0 335.2 L328.9 335.0 L330.9 334.7 L332.9 334.5 L334.9 334.3 L336.9 334.1 L338.9 333.9 L340.8 333.7 L342.7 333.5 L344.6 333.3 L346.5 333.1 L348.4 332.9 L350.3 332.7 L352.2 332.5 L354.1 332.4 L356.0 332.2 L357.9 332.0 L359.8 331.8 L361.7 331.6 L363.6 331.4 L365.5 331.2 L367.5 331.0 L369.5 330.8 L371.4 330.6 L373.4 330.4 L375.4 330.2 L377.4 330.0 L379.3 329.8 L381.3 329.6 L383.3 329.4 L385.3 329.2 L387.2 329.0 L389.2 328.8 L391.2 328.6 L393.2 328.4 L395.2 328.2 L397.1 328.0 L399.1 327.8 L401.1 327.5 L403.1 327.3 L405.0 327.1 L407.0 326.9 L409.0 326.6 L411.0 326.4 L412.9 326.1 L414.9 325.9 L416.9 325.6 L418.8 325.3 L420.8 325.0 L422.7 324.7 L424.7 324.4 L426.6 324.0 L428.6 323.7 L430.5 323.3 L432.5 322.9 L434.4 322.5 L436.4 322.1 L438.3 321.7 L440.3 321.4 L442.2 321.0 L444.2 320.6 L446.1 320.2 L448.1 319.8 L450.0 319.5 L452.0 319.1 L453.9 318.8 L455.8 318.5 L457.8 318.2 L459.7 317.9 L461.7 317.6 L463.6 317.3 L465.6 317.0 L467.5 316.7 L469.4 316.5 L471.4 316.2 L473.3 315.9 L475.3 315.7 L477.2 315.4 L479.1 315.1 L481.1 314.8 L483.0 314.5 L485.0 314.2 L486.9 313.9 L488.9 313.6 L490.8 313.3 L492.7 313.0 L494.7 312.6 L496.6 312.3 L498.6 311.9 L500.5 311.5 L502.5 311.2 L504.4 310.8 L506.3 310.4 L508.3 310.0 L510.2 309.6 L512.2 309.2 L514.1 308.8 L516.0 308.4 L518.0 308.1 L519.9 307.7 L521.9 307.3 L523.8 306.9 L525.8 306.6 L527.7 306.2 L529.6 305.9 L531.6 305.5 L533.5 305.2 L535.5 304.9 L537.4 304.6 L539.4 304.3 L541.3 304.0 L543.3 303.7 L545.2 303.4 L547.2 303.1 L549.1 302.8 L551.1 302.5 L553.0 302.1 L555.0 301.8 L556.9 301.4 L558.9 301.0 L560.8 300.7 L562.8 300.2 L564.7 299.8 L566.6 299.3 L568.4 298.7 L570.3 298.0 L572.1 297.2 L574.0 296.5 L575.8 295.8 L577.7 295.2 L579.6 294.6 L581.5 294.1 L583.4 293.6 L585.3 293.1 L587.2 292.6 L589.1 292.1 L591.0 291.7 L592.8 291.2 L594.7 290.7 L596.6 290.2 L598.5 289.7 L600.4 289.2 L602.3 288.7 L604.2 288.1 L606.1 287.5 L608.0 286.9 L609.9 286.2 L611.8 285.5 L613.7 284.8 L615.6 284.1 L617.5 283.3 L619.4 282.6 L621.3 281.8 L623.2 281.1 L625.1 280.4 L627.0 279.7 L628.9 279.0 L630.8 278.4 L632.8 277.8 L634.7 277.2 L636.7 276.6 L638.7 276.0 L640.6 275.5 L642.6 274.9 L644.6 274.3 L646.5 273.7 L648.5 273.1 L650.5 272.4 L652.4 271.8 L654.4 271.1 L656.4 270.4 L658.3 269.6 L660.3 268.9 L662.3 268.2 L664.2 267.6 L666.2 266.9 L668.2 266.3 L670.1 265.6 L672.1 265.0 L674.1 264.4 L676.0 263.8 L678.0 263.3 L680.0 262.7 L681.9 262.1 L683.9 261.6 L685.9 261.1 L687.8 260.6 L689.8 260.0 L691.8 259.5 L693.7 259.1 L695.7 258.6 L697.7 258.1 L699.6 257.6 L701.6 257.2 L703.6 256.8 L705.5 256.3 L707.5 255.9 L709.5 255.5 L711.4 255.1 L713.4 254.7 L715.4 254.3 L717.3 253.9 L719.3 253.6 L721.3 253.3 L723.2 252.9 L725.2 252.6 L727.2 252.3 L729.1 252.0 L731.1 251.8 L733.1 251.5 L735.0 251.2 L737.0 251.0 L738.9 250.8 L740.8 250.6 L742.8 250.4 L744.7 250.2 L746.6 250.0 L748.5 249.8 L750.4 249.6 L752.3 249.4 L754.2 249.2 L756.2 249.0 L758.1 248.8 L760.0 248.6 L761.9 248.4 L763.8 248.1 L765.7 247.9 L767.6 247.6 L769.5 247.4 L771.4 247.1 L773.2 246.8 L775.1 246.6 L777.0 246.3 L778.9 246.0 L780.8 245.8 L782.7 245.6 L784.6 245.3 L786.5 245.1 L788.4 244.9 L790.3 244.7 L792.2 244.5 L794.1 244.3 L796.0 244.1 L797.9 243.9 L799.8 243.7 L801.6 243.5 L803.5 243.4 L805.4 243.2 L807.3 243.0 L809.2 242.8 L811.1 242.7 L813.0 242.5 L814.9 242.3 L816.8 242.2 L818.7 242.0 L820.6 241.9 L822.5 241.7 L824.4 241.6 L826.3 241.4 L828.2 241.3 L830.1 241.1 L832.0 241.0 L833.9 240.8 L835.8 240.7 L837.7 240.5 L839.6 240.4 L841.5 240.3 L843.4 240.1 L845.3 240.0 L847.2 239.8 L849.1 239.7 L851.0 239.6 L852.9 239.5 L854.8 239.3 L856.7 239.2 L858.6 239.1 L860.5 238.9 L862.4 238.8 L864.3 238.6 L866.2 238.5 L868.1 238.4 L870.0 238.2 L871.9 238.1 L873.8 237.9 L875.7 237.8 L877.6 237.6 L879.5 237.5 L881.3 237.3 L883.2 237.1 L885.1 237.0 L887.0 236.8 L888.9 236.7 L890.8 236.5 L892.7 236.4 L894.6 236.3 L896.5 236.1 L898.4 236.0 L900.3 235.8 L902.2 235.7 L904.1 235.6 L906.0 235.4 L907.9 235.3 L909.8 235.2 L911.7 235.0 L913.6 234.9 L915.5 234.8 L917.4 234.6 L919.3 234.5 L921.2 234.4 L923.1 234.2 L925.0 234.1 L926.9 234.0 L928.8 233.9 L930.7 233.8 L932.5 233.7 L934.4 233.5 L936.3 233.4 L938.2 233.3 L940.1 233.1 L942.0 233.0 L943.9 232.9 L945.8 232.7 L947.7 232.5 L949.6 232.4 L951.5 232.2 L953.4 232.0 L955.3 231.8 L957.2 231.6 L959.1 231.3 L961.0 231.1 L962.9 230.9 L964.8 230.7 L966.7 230.4 L968.6 230.2 L970.5 229.9 L972.4 229.7 L974.3 229.5 L976.2 229.2 L978.1 229.0 L980.0 228.7 L981.9 228.4 L983.8 228.2 L985.6 227.9 L987.5 227.6 L989.4 227.3 L991.3 227.0 L993.2 226.7 L995.1 226.4 L997.0 226.0 L998.9 225.7 L1000.8 225.3 L1002.7 224.9 L1004.6 224.4 L1006.5 223.9 L1008.4 223.4 L1010.3 223.0 L1012.2 222.6 L1014.1 222.2 L1016.0 221.9 L1017.9 221.5 L1019.8 221.2 L1021.7 220.9 L1023.6 220.6 L1025.5 220.4 L1027.4 220.2 L1029.3 220.1 L1031.2 219.9 L1033.1 219.8 L1035.0 219.6 L1036.9 219.5 L1038.8 219.4 L1040.6 219.3 L1042.5 219.2 L1044.4 219.1 L1046.3 219.0 L1048.2 218.8 L1050.1 218.7 L1052.0 218.6" stroke="#0000ff" fill="none" stroke-width="1" shape-rendering="crispEdges"/>
<path d="M2.0 357.5 L3.9 357.3 L5.7 357.1 L7.6 356.9 L9.4 356.7 L11.3 356.4 L13.1 356.2 L15.0 356.0 L16.9 355.8 L18.8 355.5 L20.6 355.2 L22.5 355.0 L24.4 354.7 L26.2 354.5 L28.1 354.2 L30.0 354.0 L31.9 353.8 L33.8 353.6 L35.6 353.4 L37.5 353.2 L39.4 353.0 L41.2 352.8 L43.1 352.7 L45.0 352.5 L46.9 352.4 L48.8 352.2 L50.6 352.1 L52.5 352.0 L54.4 351.9 L56.2 351.8 L58.1 351.6 L60.0 351.5 L62.0 351.3 L64.0 351.1 L66.0 350.9 L68.0 350.7 L70.0 350.6 L72.0 350.5 L73.9 350.5 L75.8 350.5 L77.7 350.5 L79.6 350.4 L81.5 350.4 L83.4 350.4 L85.3 350.4 L87.2 350.4 L89.1 350.4 L91.0 350.4 L92.8 350.4 L94.6 350.4 L96.4 350.4 L98.2 350.4 L100.0 350.4 L102.0 350.4 L104.0 350.3 L106.0 350.2 L108.0 350.0 L110.0 349.9 L112.0 349.7 L114.0 349.6 L116.0 349.4 L117.8 349.3 L119.7 349.1 L121.5 349.0 L123.3 348.9 L125.2 348.7 L127.0 348.5 L128.8 348.3 L130.5 348.0 L132.2 347.7 L134.0 347.4 L135.8 347.2 L137.5 346.9 L139.2 346.7 L141.0 346.5 L142.8 346.2 L144.5 346.0 L146.2 345.7 L148.0 345.4 L149.7 345.1 L151.3 344.8 L153.0 344.5 L155.0 343.9 L157.0 343.4 L158.5 343.2 L160.0 343.0 L161.8 342.6 L163.5 342.1 L165.2 341.5 L167.0 340.8 L168.8 340.1 L170.5 339.4 L172.5 338.5 L174.4 337.4 L176.4 336.3 L178.4 335.2 L180.3 334.2 L182.3 333.5 L184.1 333.0 L185.9 332.7 L187.7 332.4 L189.4 332.1 L191.2 331.8 L193.0 331.4 L194.8 331.0 L196.6 330.5 L198.4 330.1 L200.2 329.6 L202.0 329.1 L203.8 328.7 L205.6 328.3 L207.4 327.9 L209.2 327.6 L211.0 327.2 L212.8 326.9 L214.6 326.5 L216.4 326.1 L218.2 325.8 L220.0 325.4 L221.8 325.1 L223.6 324.7 L225.4 324.4 L227.2 324.1 L229.0 323.8 L230.8 323.5 L232.5 323.3 L234.3 323.0 L236.1 322.7 L238.1 322.3 L240.1 322.0 L242.1 321.6 L244.0 321.2 L246.0 320.8 L248.0 320.4 L250.0 320.1 L251.8 319.8 L253.6 319.6 L255.4 319.3 L257.2 319.1 L259.0 318.8 L260.8 318.5 L262.6 318.1 L264.4 317.7 L266.1 317.1 L267.9 316.6 L269.7 316.2 L271.5 315.8 L273.3 315.5 L275.1 315.2 L276.9 314.9 L278.7 314.7 L280.5 314.5 L282.3 314.2 L284.1 313.9 L285.9 313.7 L287.6 313.4 L289.4 313.1 L291.2 312.9 L293.0 312.6 L294.8 312.3 L296.6 312.1 L298.4 311.8 L300.2 311.6 L302.0 311.3 L303.8 311.0 L305.6 310.7 L307.4 310.3 L309.2 310.0 L311.0 309.6 L312.8 309.2 L314.6 308.8 L316.3 308.4 L318.1 307.9 L319.8 307.4 L321.5 307.0 L323.3 306.7 L325.0 306.6 L326.9 306.6 L328.9 306.6 L330.8 306.6 L332.8 306.6 L334.7 306.6 L336.1 306.1 L337.6 305.1 L339.0 304.4 L341.0 304.1 L343.0 303.8 L345.0 303.5 L347.0 303.3 L349.0 303.1 L351.0 302.9 L353.0 302.6 L354.8 302.2 L356.6 301.8 L358.4 301.5 L360.3 301.3 L362.2 301.1 L364.2 300.9 L366.1 300.7 L368.1 300.4 L369.5 300.1 L370.9 299.7 L372.4 299.4 L374.3 299.1 L376.2 298.9 L378.2 298.7 L380.1 298.5 L382.1 298.3 L383.5 298.0 L384.9 297.8 L386.4 297.5 L388.3 297.3 L390.2 297.1 L392.2 296.9 L394.1 296.7 L396.0 296.5 L397.8 296.1 L399.6 295.7 L401.4 295.4 L403.2 295.2 L405.0 295.1 L406.7 295.1 L408.3 295.3 L410.0 295.4 L411.8 295.0 L413.6 294.0 L415.4 293.1 L417.3 292.4 L419.2 291.6 L421.1 291.0 L423.0 290.4 L424.9 289.9 L426.9 289.6 L428.9 289.2 L430.8 288.8 L432.7 288.3 L434.6 287.8 L436.6 287.4 L438.5 286.9 L440.4 286.5 L442.2 286.1 L444.1 285.8 L446.0 285.4 L447.9 284.9 L449.9 284.4 L451.9 284.0 L453.8 283.5 L455.4 283.2 L456.9 282.9 L458.4 282.6 L460.0 282.3 L461.9 282.0 L463.9 281.6 L465.8 281.3 L467.7 281.0 L469.6 280.6 L471.6 280.3 L473.5 280.0 L475.4 279.7 L477.3 279.4 L479.2 279.1 L481.2 278.8 L483.1 278.5 L485.0 278.1 L486.9 277.8 L488.9 277.5 L490.8 277.2 L492.7 276.9 L494.5 276.6 L496.4 276.3 L498.2 276.0 L500.1 275.8 L501.9 275.5 L503.8 275.1 L505.6 274.8 L507.4 274.5 L509.3 274.1 L511.1 273.7 L513.0 273.2 L514.8 272.8 L516.7 272.3 L518.5 271.7 L520.3 271.2 L522.2 270.6 L524.0 270.0 L525.9 269.5 L527.7 268.9 L529.6 268.3 L531.4 267.7 L533.2 267.1 L535.1 266.4 L537.0 265.8 L538.8 265.1 L540.7 264.4 L542.5 263.8 L544.4 263.1 L546.2 262.5 L548.2 261.8 L550.1 261.2 L552.1 260.5 L554.1 259.9 L556.1 259.3 L558.0 258.6 L560.0 258.0 L562.0 257.4 L563.9 256.8 L565.9 256.3 L567.9 255.7 L569.8 255.2 L571.8 254.6 L573.8 254.0 L575.7 253.4 L577.7 252.7 L579.7 252.0 L581.6 251.2 L583.6 250.4 L585.6 249.5 L587.5 248.6 L589.5 247.7 L591.5 246.7 L593.4 245.8 L595.4 244.8 L597.4 243.8 L599.3 242.8 L601.3 241.7 L603.2 240.6 L605.2 239.5 L607.1 238.3 L609.1 237.2 L611.0 236.1 L613.0 235.0 L615.0 233.9 L617.0 232.8 L618.9 231.7 L620.9 230.6 L622.9 229.5 L624.9 228.5 L626.8 227.4 L628.8 226.3 L630.8 225.3 L632.8 224.3 L634.8 223.2 L636.8 222.2 L638.8 221.1 L640.8 220.1 L642.8 219.1 L644.8 218.1 L646.8 217.0 L648.8 216.0 L650.8 215.0 L652.8 214.0 L654.8 213.0 L656.8 212.1 L658.8 211.1 L660.8 210.1 L662.8 209.2 L664.7 208.2 L666.7 207.3 L668.6 206.3 L670.6 205.3 L672.5 204.4 L674.5 203.5 L676.4 202.6 L678.4 201.8 L680.3 201.0 L682.3 200.3 L684.1 199.7 L685.9 199.2 L687.7 198.7 L689.5 198.3 L691.4 197.8 L693.2 197.3 L695.0 196.8 L696.9 196.0 L698.8 195.1 L700.8 194.1 L702.7 193.3 L704.6 192.8 L706.4 192.5 L708.3 192.3 L710.1 192.1 L712.0 191.9 L713.8 191.8 L715.6 191.6 L717.5 191.5 L719.3 191.3 L721.2 191.2 L723.0 191.0 L725.0 190.8 L727.0 190.6 L728.9 190.4 L730.9 190.2 L732.9 189.9 L734.9 189.7 L736.9 189.5 L738.8 189.3 L740.8 189.1 L742.8 188.9 L744.8 188.7 L746.7 188.5 L748.7 188.3 L750.7 188.2 L752.5 188.1 L754.4 188.0 L756.2 187.8 L758.0 187.7 L759.9 187.6 L761.7 187.5 L763.5 187.4 L765.3 187.4 L767.2 187.3 L769.0 187.3 L770.9 187.3 L772.8 187.3 L774.7 187.4 L776.6 187.4 L778.5 187.4 L780.5 187.5 L782.4 187.5 L784.3 187.5 L786.2 187.6 L788.1 187.6 L790.0 187.6 L791.9 187.6 L793.8 187.6 L795.6 187.6 L797.5 187.6 L799.4 187.6 L801.2 187.6 L803.1 187.6 L805.0 187.6 L807.0 188.5 L809.0 188.5 L810.9 188.5 L812.9 188.5 L814.9 188.5 L816.8 188.5 L818.8 188.5 L820.7 188.5 L822.7 188.5 L824.7 188.5 L826.6 188.4 L828.6 188.4 L830.6 188.4 L832.5 188.4 L834.5 188.4 L836.4 188.4 L838.4 188.4 L840.4 188.4 L842.3 188.4 L844.3 188.4 L846.3 188.3 L848.2 188.3 L850.2 188.3 L852.1 188.3 L854.1 188.3 L856.1 188.3 L858.0 188.3 L860.0 188.3 L861.8 188.3 L863.7 188.3 L865.5 188.4 L867.4 188.4 L869.2 188.4 L871.1 188.5 L872.9 188.5 L874.8 188.6 L876.6 188.6 L878.5 188.7 L880.3 188.7 L882.2 188.8 L884.1 188.8 L886.1 188.9 L888.1 188.9 L890.1 189.0 L892.1 189.0 L894.1 189.1 L896.1 189.1 L898.1 189.2 L900.1 189.3 L902.0 189.4 L904.0 189.5 L906.0 189.6 L908.0 189.7 L909.9 190.4 L911.8 190.4 L913.7 190.4 L915.7 190.4 L917.6 190.4 L919.5 190.4 L921.4 190.4 L923.4 190.4 L925.3 190.4 L927.2 190.4 L929.2 190.4 L931.1 190.4 L933.0 190.4 L935.0 190.4 L936.9 190.4 L938.8 190.4 L940.8 190.4 L942.7 190.4 L944.6 190.4 L946.5 190.4 L948.5 190.4 L950.4 190.4 L952.3 190.4 L953.7 190.0 L955.0 189.5 L957.0 189.1 L959.0 188.9 L961.0 188.6 L963.0 188.3 L965.0 188.0 L967.0 187.6 L969.0 187.0 L971.0 186.4 L973.0 185.9 L975.0 185.5 L977.0 185.2 L979.0 184.9 L981.0 184.7 L983.0 184.4 L985.0 184.2 L987.0 184.0 L989.0 183.8 L991.0 183.5 L993.0 183.3 L995.0 183.0 L997.0 182.7 L999.0 182.4 L1001.0 182.1 L1003.0 181.7 L1005.0 181.4 L1007.0 181.0 L1009.0 180.6 L1011.0 180.2 L1013.0 179.9 L1015.0 179.5 L1017.0 179.1 L1019.0 178.7 L1021.0 178.3 L1023.0 177.9 L1025.0 177.5 L1027.0 177.1 L1029.0 176.7 L1031.0 176.3 L1033.0 176.2 L1035.0 176.2 L1037.0 176.2 L1039.0 176.2 L1041.0 176.2 L1043.0 176.2 L1045.0 176.2 L1047.0 176.2 L1049.0 176.2 L1051.0 176.2 L1053.0 176.2" stroke="#58c8f8" fill="none" stroke-width="1" shape-rendering="crispEdges"/>
<path d="M2.0 350.5 L4.0 350.2 L6.0 349.9 L8.0 349.6 L10.0 349.3 L12.0 349.0 L13.9 348.8 L15.7 348.5 L17.6 348.3 L19.4 348.1 L21.3 347.8 L23.1 347.7 L25.0 347.5 L26.9 347.4 L28.8 347.2 L30.8 347.1 L32.7 347.0 L34.6 346.9 L36.5 346.8 L38.5 346.7 L40.4 346.6 L42.3 346.5 L44.2 346.4 L46.2 346.3 L48.1 346.1 L50.0 346.0 L52.0 345.8 L54.0 345.6 L56.0 345.4 L58.0 345.2 L60.0 344.9 L62.0 344.7 L64.0 344.5 L66.0 344.3 L68.0 344.1 L70.0 344.0 L72.0 344.0 L74.0 344.0 L76.0 344.0 L78.0 344.0 L80.0 344.0 L82.0 344.0 L84.0 344.0 L86.0 344.0 L88.0 344.0 L89.5 344.2 L91.0 344.5 L92.8 344.5 L94.6 344.5 L96.4 344.5 L98.2 344.5 L100.0 344.5 L102.0 344.5 L104.0 344.4 L106.0 344.3 L108.0 344.1 L110.0 344.0 L112.0 343.8 L114.0 343.6 L116.0 343.4 L118.0 343.2 L120.0 342.9 L122.0 342.7 L124.0 342.4 L126.0 342.2 L128.0 341.9 L130.0 341.7 L132.0 341.4 L133.8 341.2 L135.5 340.9 L137.2 340.7 L139.0 340.4 L140.5 340.1 L142.0 339.8 L143.5 339.5 L145.0 339.2 L146.5 338.8 L148.0 338.5 L149.7 338.2 L151.3 337.9 L153.0 337.5 L155.0 336.9 L157.0 336.4 L158.5 336.2 L160.0 336.0 L161.9 335.5 L163.8 334.7 L165.8 333.7 L167.7 332.7 L169.6 331.7 L171.5 330.8 L173.3 330.0 L175.1 329.3 L176.9 328.6 L178.7 327.9 L180.5 327.2 L182.3 326.5 L184.0 325.8 L185.8 325.2 L187.5 324.5 L189.3 323.9 L191.0 323.3 L192.8 322.7 L194.7 322.1 L196.5 321.6 L198.3 321.0 L200.1 320.5 L202.0 320.0 L203.8 319.5 L205.6 319.0 L207.4 318.5 L209.2 318.1 L211.0 317.6 L212.8 317.2 L214.6 316.8 L216.4 316.4 L218.2 316.1 L220.0 315.7 L221.8 315.4 L223.6 315.1 L225.4 314.7 L227.2 314.3 L229.0 314.0 L230.8 313.6 L232.5 313.3 L234.3 312.9 L236.1 312.5 L238.1 312.1 L240.1 311.6 L242.1 311.2 L244.0 310.7 L246.0 310.3 L248.0 309.8 L250.0 309.4 L251.8 309.0 L253.6 308.7 L255.4 308.3 L257.2 307.9 L259.0 307.6 L260.8 307.2 L262.6 306.8 L264.4 306.3 L266.1 305.9 L267.9 305.4 L269.7 305.0 L271.5 304.7 L273.3 304.4 L275.1 304.2 L276.9 304.0 L278.7 303.8 L280.5 303.6 L282.3 303.4 L284.1 303.2 L285.9 302.9 L287.6 302.6 L289.4 302.4 L291.2 302.1 L293.0 301.8 L294.8 301.5 L296.6 301.2 L298.4 300.8 L300.2 300.5 L302.0 300.1 L303.8 299.7 L305.6 299.2 L307.4 298.6 L309.2 298.1 L311.0 297.8 L312.8 297.5 L314.6 297.2 L316.4 297.0 L318.2 296.7 L320.0 296.4 L321.7 296.1 L323.3 295.7 L325.0 295.4 L326.8 295.1 L328.6 294.8 L330.4 294.5 L332.1 294.3 L333.8 294.1 L335.5 293.9 L337.3 293.7 L339.0 293.4 L340.8 293.1 L342.6 292.7 L344.4 292.4 L346.1 292.1 L347.8 291.9 L349.5 291.7 L351.3 291.5 L353.0 291.3 L354.8 291.0 L356.6 290.7 L358.4 290.4 L360.3 290.2 L362.2 290.0 L364.2 289.8 L366.1 289.6 L368.1 289.3 L369.5 289.1 L370.9 288.8 L372.4 288.6 L374.3 288.4 L376.2 288.2 L378.2 288.0 L380.1 287.8 L382.1 287.5 L383.5 287.2 L384.9 286.8 L386.4 286.4 L388.3 286.2 L390.2 286.0 L392.2 285.8 L394.1 285.6 L396.0 285.4 L397.8 285.1 L399.6 284.8 L401.4 284.6 L403.2 284.4 L405.0 284.3 L406.7 284.1 L408.3 284.0 L410.0 283.8 L411.8 283.5 L413.6 283.1 L415.4 282.7 L417.3 282.1 L419.2 281.4 L421.1 280.7 L423.0 280.0 L424.9 279.3 L426.9 278.6 L428.9 277.9 L430.8 277.3 L432.7 276.7 L434.6 276.1 L436.6 275.5 L438.5 275.0 L440.4 274.5 L442.2 274.0 L444.1 273.5 L446.0 273.1 L447.9 272.7 L449.9 272.3 L451.9 271.9 L453.8 271.5 L455.4 271.2 L456.9 271.0 L458.4 270.7 L460.0 270.4 L461.8 269.9 L463.5 269.3 L465.3 268.6 L467.0 267.9 L468.8 267.2 L470.5 266.7 L472.3 266.2 L474.2 265.8 L476.0 265.5 L477.9 265.2 L479.7 264.9 L481.6 264.6 L483.4 264.4 L485.2 264.1 L487.1 263.9 L488.9 263.7 L490.8 263.4 L492.7 263.2 L494.5 262.9 L496.4 262.7 L498.2 262.5 L500.1 262.3 L501.9 262.1 L503.8 261.8 L505.6 261.6 L507.4 261.3 L509.3 261.0 L511.1 260.6 L513.0 260.2 L514.8 259.8 L516.7 259.3 L518.5 258.7 L520.3 258.2 L522.2 257.6 L524.0 257.1 L525.9 256.5 L527.7 256.0 L529.6 255.5 L531.4 255.0 L533.2 254.5 L535.1 253.9 L537.0 253.4 L538.8 252.9 L540.7 252.3 L542.5 251.8 L544.4 251.1 L546.2 250.5 L548.1 249.8 L549.9 249.0 L551.8 248.2 L553.6 247.3 L555.5 246.4 L557.3 245.5 L559.2 244.6 L561.0 243.7 L562.9 242.9 L564.7 242.2 L566.6 241.5 L568.5 241.0 L570.4 240.4 L572.4 239.9 L574.3 239.4 L576.2 238.8 L578.1 238.2 L580.0 237.5 L581.9 236.7 L583.9 235.9 L585.8 235.0 L587.7 234.0 L589.6 233.0 L591.5 231.9 L593.5 230.8 L595.4 229.7 L597.2 228.6 L599.0 227.5 L600.7 226.3 L602.5 225.1 L604.3 223.8 L606.0 222.6 L607.8 221.3 L609.6 220.0 L611.4 218.7 L613.2 217.4 L614.9 216.0 L616.7 214.6 L618.5 213.2 L620.3 211.8 L622.1 210.5 L623.8 209.2 L625.6 207.8 L627.4 206.5 L629.2 205.2 L630.9 204.0 L632.7 203.0 L634.7 201.9 L636.6 201.0 L638.6 200.1 L640.6 199.3 L642.5 198.5 L644.5 197.7 L646.5 196.9 L648.4 196.0 L650.4 195.0 L652.2 194.0 L653.9 192.9 L655.7 191.8 L657.5 190.6 L659.2 189.5 L661.0 188.3 L662.8 187.2 L664.6 186.2 L666.3 185.2 L668.1 184.3 L669.9 183.4 L671.6 182.6 L673.4 181.7 L675.2 180.8 L676.9 179.8 L678.7 178.8 L680.5 177.8 L682.3 177.0 L684.0 176.4 L685.9 176.0 L687.7 175.6 L689.5 175.3 L691.3 174.9 L693.2 174.6 L695.0 174.3 L696.9 173.9 L698.8 173.4 L700.7 172.8 L702.6 172.3 L704.4 171.8 L706.3 171.3 L708.2 171.0 L710.1 170.7 L712.0 170.6 L714.0 170.6 L716.0 170.6 L718.0 170.5 L720.0 170.5 L722.0 170.5 L724.0 170.5 L726.0 170.5 L728.0 170.4 L730.0 170.4 L732.0 170.4 L734.0 170.4 L736.0 170.4 L738.0 170.4 L740.0 170.4 L742.0 170.3 L744.0 170.3 L746.0 170.3 L748.0 170.3 L750.0 170.3 L752.0 170.3 L754.0 170.3 L756.0 170.3 L758.0 170.3 L760.0 170.3 L762.0 170.3 L764.0 170.3 L766.0 170.3 L768.0 170.3 L770.0 170.3 L772.0 170.3 L774.0 170.3 L776.0 170.4 L778.0 170.4 L780.0 170.4 L782.0 170.4 L784.0 170.4 L786.0 170.5 L788.0 170.5 L790.0 170.5 L791.8 170.6 L793.7 170.9 L795.5 171.2 L797.4 171.6 L799.2 171.9 L801.1 172.2 L802.9 172.4 L804.8 172.7 L806.6 172.9 L808.5 173.2 L810.3 173.4 L812.2 173.7 L814.0 173.9 L815.9 174.2 L817.7 174.4 L819.5 174.6 L821.4 174.8 L823.2 175.1 L825.1 175.3 L826.9 175.4 L828.8 175.5 L830.6 175.6 L832.4 175.7 L834.3 175.8 L836.1 175.9 L838.0 176.0 L839.9 176.0 L841.7 176.1 L843.5 176.2 L845.4 176.3 L847.2 176.4 L849.0 176.5 L850.9 176.6 L852.7 176.8 L854.5 176.9 L856.4 177.0 L858.2 177.1 L860.0 177.2 L861.8 177.3 L863.7 177.4 L865.5 177.5 L867.4 177.6 L869.2 177.7 L871.1 177.8 L872.9 177.9 L874.8 178.0 L876.6 178.2 L878.5 178.4 L880.3 178.7 L882.2 179.0 L884.0 179.3 L885.9 179.5 L887.5 179.7 L889.2 179.9 L890.9 180.1 L892.6 180.2 L894.3 180.3 L896.0 180.5 L898.0 180.6 L900.0 180.8 L901.9 180.9 L903.9 181.0 L905.9 181.1 L907.9 181.3 L909.9 181.4 L911.8 181.5 L913.7 181.7 L915.7 181.8 L917.6 182.0 L919.6 182.1 L921.5 182.2 L923.4 182.3 L925.4 182.4 L927.3 182.5 L929.3 182.5 L931.2 182.5 L933.2 182.5 L935.2 182.5 L937.2 182.4 L939.2 182.4 L941.1 182.4 L943.1 182.3 L945.1 182.3 L947.1 182.2 L949.1 182.2 L951.0 182.1 L953.0 182.1 L955.0 182.0 L957.0 181.9 L959.0 181.6 L961.0 181.3 L963.0 180.9 L965.0 180.4 L967.0 179.9 L969.0 179.4 L971.0 178.9 L973.0 178.4 L975.0 178.0 L977.0 177.6 L979.0 177.1 L981.0 176.7 L983.0 176.3 L985.0 176.0 L987.0 175.8 L989.0 175.6 L991.0 175.4 L993.0 175.2 L995.0 175.0 L997.0 174.7 L999.0 174.3 L1001.0 173.8 L1003.0 173.4 L1005.0 173.0 L1007.0 172.7 L1009.0 172.4 L1011.0 172.1 L1013.0 171.8 L1015.0 171.5 L1017.0 171.2 L1019.0 170.8 L1021.0 170.4 L1023.0 170.0 L1025.0 169.5 L1026.5 168.9 L1028.0 168.5 L1029.9 168.5 L1031.8 168.5 L1033.8 168.5 L1035.7 168.5 L1037.6 168.5 L1039.5 168.5 L1041.5 168.5 L1043.4 168.5 L1045.3 168.5 L1047.2 168.5 L1049.2 168.5 L1051.1 168.5 L1053.0 168.5" stroke="#ffff00" fill="none" stroke-width="1" shape-rendering="crispEdges"/>
<path d="M2.0 342.5 L4.0 342.2 L6.0 341.9 L8.0 341.7 L10.0 341.4 L12.0 341.1 L14.0 340.9 L16.0 340.7 L18.0 340.4 L20.0 340.2 L22.0 340.0 L24.0 339.8 L26.0 339.6 L28.0 339.4 L30.0 339.2 L32.0 339.0 L34.0 338.8 L36.0 338.6 L38.0 338.4 L40.0 338.2 L42.0 338.0 L44.0 337.8 L46.0 337.6 L48.0 337.5 L50.0 337.3 L52.0 337.1 L54.0 337.0 L56.0 336.8 L58.0 336.7 L60.0 336.5 L62.0 336.4 L64.0 336.3 L66.0 336.2 L68.0 336.1 L70.0 336.0 L72.0 335.8 L73.7 335.6 L75.3 335.3 L77.0 335.2 L78.8 335.4 L80.6 335.7 L82.4 336.2 L84.2 336.7 L86.0 337.0 L88.0 337.2 L90.0 337.3 L92.0 337.5 L94.0 337.8 L96.0 338.1 L98.0 338.4 L100.0 338.5 L101.9 338.5 L103.8 338.4 L105.6 338.3 L107.5 338.1 L109.4 338.0 L111.2 337.8 L113.1 337.6 L115.0 337.5 L116.9 337.4 L118.8 337.3 L120.6 337.2 L122.5 337.1 L124.4 337.0 L126.2 336.9 L128.1 336.8 L130.0 336.6 L132.0 336.3 L134.0 335.8 L135.7 335.4 L137.3 335.0 L139.0 334.6 L140.5 334.2 L142.0 333.9 L143.5 333.5 L145.0 333.2 L146.5 332.9 L148.0 332.6 L149.5 332.3 L151.0 332.0 L152.5 331.6 L154.0 331.1 L155.5 330.5 L157.0 329.8 L158.5 328.9 L160.0 328.0 L161.9 327.0 L163.8 326.1 L165.8 325.3 L167.7 324.5 L169.6 323.6 L171.5 322.7 L173.2 321.9 L174.9 321.1 L176.6 320.3 L178.3 319.4 L180.0 318.4 L181.7 317.1 L183.3 315.5 L184.9 314.0 L186.6 313.0 L188.1 312.6 L189.5 312.3 L191.0 312.0 L192.8 311.5 L194.7 310.9 L196.5 310.3 L198.3 309.6 L200.1 308.9 L202.0 308.3 L203.8 307.7 L205.6 307.1 L207.4 306.5 L209.2 306.0 L211.0 305.4 L212.8 304.9 L214.6 304.4 L216.4 303.9 L218.2 303.5 L220.0 303.1 L221.8 302.7 L223.6 302.2 L225.4 301.8 L227.2 301.4 L229.0 300.9 L230.8 300.4 L232.5 300.0 L234.3 299.5 L236.1 299.1 L238.1 298.7 L240.1 298.2 L242.1 297.8 L244.0 297.4 L246.0 297.0 L248.0 296.6 L250.0 296.2 L251.8 295.9 L253.6 295.6 L255.4 295.3 L257.2 295.0 L259.0 294.7 L260.8 294.3 L262.6 293.9 L264.4 293.4 L266.1 292.9 L267.9 292.4 L269.7 291.9 L271.5 291.6 L273.3 291.4 L275.1 291.2 L276.9 291.0 L278.7 290.8 L280.5 290.7 L282.3 290.5 L284.1 290.3 L285.9 290.1 L287.6 289.9 L289.4 289.7 L291.2 289.4 L293.0 289.2 L294.8 288.9 L296.6 288.7 L298.4 288.4 L300.2 288.1 L302.0 287.7 L303.8 287.3 L305.4 286.7 L307.1 285.9 L308.7 285.1 L310.3 284.6 L312.1 284.2 L314.0 283.8 L315.8 283.5 L317.6 283.1 L319.5 282.9 L321.3 282.6 L323.2 282.5 L325.0 282.5 L326.9 282.5 L328.9 282.5 L330.8 282.5 L332.8 282.5 L334.7 282.5 L336.1 282.0 L337.6 281.1 L339.0 280.5 L340.9 280.2 L342.9 280.0 L344.8 279.8 L346.7 279.6 L348.7 279.4 L350.6 279.2 L352.6 279.0 L354.5 278.8 L356.4 278.6 L358.4 278.4 L360.3 278.2 L362.2 278.0 L364.2 277.8 L366.1 277.5 L368.1 277.3 L369.5 277.0 L370.9 276.7 L372.4 276.4 L374.3 276.2 L376.2 276.1 L378.2 275.9 L380.1 275.7 L382.1 275.5 L383.7 274.9 L385.3 274.3 L387.1 274.1 L388.9 274.0 L390.7 273.9 L392.5 273.8 L394.3 273.7 L396.0 273.5 L397.8 273.2 L399.6 272.8 L401.4 272.4 L403.2 272.2 L405.0 272.1 L406.7 272.2 L408.3 272.3 L410.0 272.3 L411.8 272.0 L413.6 271.2 L415.4 270.4 L417.3 269.6 L419.2 268.8 L421.1 268.1 L423.0 267.3 L424.9 266.6 L426.9 266.0 L428.9 265.3 L430.8 264.6 L432.7 263.8 L434.6 262.9 L436.6 262.0 L438.5 261.2 L440.4 260.6 L442.2 260.0 L444.1 259.5 L446.0 259.0 L447.9 258.5 L449.9 258.1 L451.9 257.7 L453.8 257.3 L455.4 257.0 L456.9 256.8 L458.4 256.5 L460.0 256.2 L461.8 255.8 L463.5 255.3 L465.3 254.8 L467.0 254.2 L468.8 253.7 L470.5 253.3 L472.3 252.9 L474.2 252.6 L476.0 252.3 L477.9 252.0 L479.7 251.8 L481.6 251.6 L483.4 251.3 L485.2 251.1 L487.1 250.9 L488.9 250.7 L490.8 250.5 L492.7 250.3 L494.5 250.1 L496.4 250.0 L498.2 249.8 L500.1 249.7 L501.9 249.5 L503.8 249.3 L505.6 249.1 L507.4 248.9 L509.3 248.6 L511.1 248.2 L513.0 247.8 L514.8 247.2 L516.7 246.6 L518.5 245.9 L520.3 245.2 L522.2 244.4 L524.0 243.7 L525.9 242.9 L527.7 242.2 L529.5 241.5 L531.2 240.8 L533.0 240.1 L534.7 239.4 L536.5 238.6 L538.2 237.9 L540.0 237.2 L541.7 236.5 L543.5 235.8 L545.2 235.2 L546.9 234.4 L548.7 233.6 L550.4 232.8 L552.1 231.9 L553.8 231.0 L555.6 230.0 L557.4 228.9 L559.2 227.8 L561.0 226.8 L562.7 225.7 L564.5 224.8 L566.3 224.0 L568.0 223.5 L569.8 223.0 L571.5 222.5 L573.2 222.0 L574.9 221.3 L576.5 220.5 L578.2 219.7 L579.9 218.8 L581.5 217.8 L583.4 216.7 L585.2 215.5 L587.1 214.2 L588.9 212.9 L590.7 211.5 L592.6 210.2 L594.5 208.9 L596.5 207.5 L598.4 206.2 L600.3 204.8 L602.3 203.3 L604.2 201.7 L606.2 200.1 L608.1 198.4 L610.0 196.7 L612.0 195.0 L613.5 193.7 L615.0 192.3 L617.0 190.7 L618.9 189.0 L620.9 187.4 L622.9 185.7 L624.8 184.1 L626.8 182.5 L628.8 181.0 L630.7 179.5 L632.7 178.2 L634.5 177.1 L636.2 176.0 L638.0 175.1 L639.8 174.1 L641.5 173.2 L643.3 172.3 L645.1 171.3 L646.9 170.2 L648.6 169.1 L650.4 167.8 L652.2 166.5 L653.9 165.2 L655.7 163.8 L657.5 162.6 L659.2 161.4 L661.0 160.2 L662.8 159.2 L664.6 158.1 L666.3 157.1 L668.1 156.1 L669.9 155.0 L671.6 153.9 L673.4 152.7 L675.2 151.6 L676.9 150.5 L678.7 149.6 L680.5 148.7 L682.3 148.1 L684.1 147.6 L685.9 147.1 L687.7 146.7 L689.5 146.4 L691.4 146.1 L693.2 145.7 L695.0 145.4 L696.9 145.1 L698.8 144.8 L700.6 144.4 L702.5 144.1 L704.4 143.8 L706.2 143.5 L708.1 143.4 L710.0 143.3 L711.9 143.3 L713.7 143.3 L715.6 143.3 L717.4 143.3 L719.3 143.3 L721.2 143.4 L723.0 143.6 L724.9 144.0 L726.7 144.5 L728.6 144.9 L730.4 145.3 L732.3 145.7 L734.1 146.0 L736.0 146.3 L737.8 146.6 L739.7 146.9 L741.5 147.1 L743.3 147.4 L745.2 147.7 L747.0 147.9 L748.9 148.2 L750.7 148.5 L752.6 148.8 L754.4 149.1 L756.2 149.3 L758.1 149.6 L760.0 149.9 L761.8 150.2 L763.7 150.5 L765.5 150.7 L767.4 151.0 L769.2 151.3 L771.0 151.6 L772.9 151.8 L774.7 152.1 L776.6 152.3 L778.4 152.6 L780.2 152.8 L782.1 153.1 L783.9 153.4 L785.8 153.7 L787.6 154.0 L789.5 154.4 L791.5 154.9 L793.4 155.4 L795.3 155.9 L797.3 156.4 L799.2 157.0 L801.1 157.5 L802.9 158.1 L804.8 158.7 L806.6 159.3 L808.5 159.9 L810.3 160.6 L812.2 161.4 L814.0 162.2 L815.9 162.9 L817.7 163.5 L819.5 164.0 L821.4 164.4 L823.2 164.7 L825.1 165.1 L826.9 165.4 L828.8 165.7 L830.6 166.0 L832.5 166.3 L834.3 166.6 L836.2 166.8 L838.0 167.0 L839.9 167.2 L841.7 167.3 L843.6 167.5 L845.4 167.7 L847.2 168.0 L849.1 168.5 L850.9 168.9 L852.8 169.3 L854.6 169.4 L856.4 169.4 L858.2 169.4 L860.0 169.4 L861.8 169.6 L863.7 170.2 L865.5 170.8 L867.4 171.2 L869.1 171.4 L870.8 171.6 L872.5 171.7 L874.2 171.8 L875.9 172.0 L877.5 172.2 L879.4 172.5 L881.2 173.1 L883.1 173.5 L884.9 174.0 L886.8 174.3 L888.6 174.7 L890.5 175.1 L892.3 175.4 L894.2 175.7 L896.0 176.0 L897.9 176.2 L899.7 176.5 L901.6 176.8 L903.4 177.0 L905.2 177.2 L906.9 177.5 L908.6 177.7 L910.3 177.9 L912.0 178.0 L913.7 178.2 L915.4 178.4 L917.2 178.7 L919.1 178.9 L920.9 179.1 L922.8 179.3 L924.6 179.5 L926.5 179.8 L928.3 180.0 L930.2 180.2 L932.0 180.4 L933.9 180.5 L935.8 180.5 L937.7 180.5 L939.6 180.5 L941.6 180.5 L943.5 180.5 L945.4 180.5 L947.3 180.5 L949.2 180.5 L951.2 180.5 L953.1 180.5 L955.0 180.5 L957.0 180.3 L959.0 179.8 L961.0 179.0 L963.0 178.2 L965.0 177.5 L967.0 176.8 L969.0 176.1 L971.0 175.3 L973.0 174.6 L975.0 174.0 L977.0 173.4 L979.0 172.9 L981.0 172.4 L983.0 171.9 L985.0 171.5 L987.0 171.2 L989.0 170.8 L991.0 170.6 L993.0 170.3 L995.0 170.0 L997.0 169.7 L999.0 169.4 L1001.0 169.2 L1003.0 168.9 L1005.0 168.5 L1007.0 168.0 L1009.0 167.4 L1011.0 166.8 L1013.0 166.1 L1015.0 165.5 L1017.0 164.9 L1019.0 164.4 L1021.0 163.8 L1023.0 163.2 L1025.0 162.5 L1027.0 161.5 L1029.0 161.5 L1031.0 161.5 L1033.0 161.5 L1035.0 161.5 L1036.5 161.8 L1038.0 162.2 L1039.9 162.2 L1041.8 162.2 L1043.6 162.2 L1045.5 162.2 L1047.4 162.2 L1049.2 162.2 L1051.1 162.2 L1053.0 162.2" stroke="#ff00ff" fill="none" stroke-width="1" shape-rendering="crispEdges"/>
<path d="M2.0 333.0 L3.8 332.9 L5.6 332.8 L7.4 332.6 L9.2 332.5 L11.0 332.3 L12.8 331.8 L14.7 331.0 L16.5 330.5 L18.3 330.3 L20.2 330.1 L22.0 330.0 L23.9 329.9 L25.9 329.7 L27.8 329.6 L29.7 329.5 L31.6 329.4 L33.6 329.3 L35.5 329.2 L37.4 329.2 L39.3 329.1 L41.2 329.1 L43.0 329.0 L44.9 329.0 L46.8 328.9 L48.7 328.9 L50.6 328.9 L52.5 328.8 L54.3 328.8 L56.2 328.8 L58.1 328.8 L60.0 328.8 L61.9 328.8 L63.8 328.8 L65.7 328.8 L67.6 328.8 L69.4 328.8 L71.3 328.8 L73.2 328.8 L75.1 328.8 L77.0 328.8 L78.7 329.2 L80.3 330.1 L82.0 331.0 L83.9 331.7 L85.8 332.3 L87.7 333.0 L88.8 333.5 L90.0 334.0 L91.2 334.6 L92.5 334.9 L94.5 334.9 L96.4 334.9 L98.4 334.9 L100.4 334.9 L102.3 334.9 L104.3 334.9 L106.2 334.9 L108.2 334.9 L110.2 334.9 L112.1 334.9 L114.1 334.9 L116.1 334.9 L118.0 334.9 L120.0 334.9 L122.0 333.9 L123.7 333.9 L125.3 333.9 L127.0 333.9 L128.5 333.4 L130.0 332.6 L131.7 332.1 L133.4 331.5 L134.9 330.8 L136.4 329.9 L138.0 329.0 L139.6 328.1 L141.2 327.4 L142.7 326.8 L144.2 326.2 L145.8 325.6 L147.4 325.0 L148.9 324.4 L150.4 323.7 L152.0 323.1 L153.6 322.5 L155.1 321.9 L156.6 321.2 L158.2 320.3 L159.5 318.9 L160.8 317.4 L162.6 316.0 L164.4 314.9 L166.2 313.8 L167.9 312.8 L169.7 311.7 L171.5 310.4 L173.1 309.1 L174.8 307.6 L176.4 306.0 L178.0 304.4 L179.7 302.5 L181.4 300.4 L183.2 298.2 L184.9 296.3 L186.6 294.8 L188.2 293.8 L189.8 292.9 L191.4 292.2 L193.0 291.5 L194.8 290.7 L196.6 289.9 L198.4 289.1 L200.2 288.4 L202.0 287.7 L203.8 287.2 L205.6 286.8 L207.4 286.4 L209.2 286.1 L211.0 285.7 L212.8 285.4 L214.6 285.0 L216.4 284.5 L218.2 284.0 L220.0 283.4 L221.8 282.8 L223.6 282.3 L225.4 281.8 L227.2 281.4 L229.0 281.0 L230.8 280.7 L232.5 280.3 L234.3 280.0 L236.1 279.7 L238.1 279.3 L240.1 278.9 L242.1 278.5 L244.0 278.1 L246.0 277.8 L248.0 277.6 L250.0 277.5 L251.8 277.5 L253.6 277.5 L255.4 277.5 L257.2 277.5 L259.0 277.5 L260.8 277.5 L262.5 277.3 L264.3 276.9 L266.0 276.5 L267.8 276.0 L269.7 275.3 L271.5 274.9 L273.3 274.7 L275.1 274.5 L276.9 274.3 L278.7 274.2 L280.5 274.0 L282.3 273.8 L284.0 273.5 L285.8 273.2 L287.5 272.8 L289.3 272.5 L291.0 272.2 L292.8 271.9 L294.7 271.7 L296.5 271.5 L298.3 271.3 L300.1 271.1 L302.0 270.8 L303.8 270.6 L305.6 270.3 L307.4 269.9 L309.2 269.5 L311.0 269.2 L312.8 268.9 L314.6 268.8 L316.3 268.8 L318.1 268.8 L319.8 268.8 L321.5 268.9 L323.3 268.9 L325.0 268.9 L326.9 268.8 L328.8 268.4 L330.7 268.0 L332.5 267.6 L334.5 267.3 L336.4 266.9 L338.3 266.5 L340.3 266.2 L342.2 266.0 L344.1 265.8 L345.9 265.7 L347.7 265.6 L349.5 265.5 L351.4 265.4 L353.2 265.3 L355.0 265.2 L356.9 265.1 L358.7 265.0 L360.5 264.9 L362.5 264.8 L364.5 264.6 L366.5 264.5 L368.5 264.3 L370.5 264.2 L372.5 264.0 L374.5 263.8 L376.5 263.7 L378.5 263.5 L380.5 263.4 L382.5 263.2 L384.5 263.1 L386.5 262.9 L388.5 262.8 L390.3 262.6 L392.1 262.4 L393.9 262.3 L395.7 262.1 L397.5 261.9 L399.3 261.7 L401.2 261.4 L403.1 261.0 L405.0 260.6 L406.8 260.3 L408.6 260.0 L410.5 259.6 L412.3 259.2 L414.1 258.6 L415.9 257.7 L417.6 256.8 L419.4 255.7 L421.2 254.7 L423.0 253.8 L424.9 252.9 L426.9 252.1 L428.9 251.3 L430.8 250.4 L432.3 249.5 L433.9 248.6 L435.4 247.7 L437.2 246.8 L439.1 245.9 L440.9 245.1 L442.8 244.2 L444.6 243.4 L446.5 242.7 L448.3 242.0 L450.2 241.3 L452.0 240.8 L453.9 240.3 L455.7 239.9 L457.6 239.6 L459.4 239.3 L461.3 239.0 L463.1 238.8 L464.9 238.5 L466.8 238.2 L468.6 237.9 L470.5 237.6 L472.3 237.2 L474.1 236.3 L476.0 235.7 L478.0 235.7 L479.9 235.7 L481.9 235.7 L483.8 235.7 L485.8 235.7 L487.8 235.7 L489.7 235.7 L491.7 235.7 L493.6 235.7 L495.6 235.7 L497.5 235.7 L499.5 235.7 L501.5 235.7 L503.4 235.7 L505.4 235.7 L507.3 235.7 L509.3 235.7 L511.1 235.4 L513.0 234.7 L514.8 233.9 L516.6 233.1 L518.5 232.3 L520.3 231.4 L522.2 230.5 L524.0 229.5 L525.9 228.4 L527.7 227.4 L529.5 226.3 L531.2 225.1 L533.0 223.8 L534.7 222.5 L536.5 221.3 L538.2 220.2 L540.0 219.2 L541.7 218.4 L543.5 217.8 L545.2 217.2 L546.9 216.4 L548.7 215.6 L550.4 214.6 L552.1 213.5 L553.8 212.3 L555.6 210.8 L557.3 209.0 L559.0 207.2 L560.8 205.4 L562.5 203.3 L564.2 201.0 L566.0 199.2 L567.7 198.4 L569.1 198.5 L570.4 198.6 L571.8 198.7 L573.7 198.3 L575.5 197.4 L577.4 196.4 L579.1 195.2 L580.8 193.9 L582.6 192.4 L584.3 190.8 L586.0 189.3 L587.6 187.6 L589.3 186.0 L590.9 184.4 L592.6 182.9 L594.3 181.7 L596.1 180.7 L597.8 179.7 L599.5 178.4 L601.4 176.4 L603.2 174.0 L605.1 171.5 L606.8 169.1 L608.5 166.7 L610.2 164.2 L612.0 161.8 L613.6 159.5 L615.2 157.2 L616.8 155.0 L618.4 152.8 L620.0 150.7 L621.8 148.3 L623.7 146.0 L625.5 143.7 L627.3 141.5 L629.2 139.6 L631.0 138.0 L632.8 136.7 L634.6 135.6 L636.4 134.6 L638.2 133.7 L640.0 132.8 L641.8 132.0 L643.6 131.3 L645.4 130.6 L647.2 129.9 L649.0 129.1 L650.9 128.0 L652.8 126.8 L654.7 125.5 L656.6 124.1 L658.5 122.7 L660.3 121.3 L662.2 119.8 L664.0 118.3 L665.9 116.7 L667.7 115.3 L669.5 113.9 L671.4 112.6 L673.2 111.3 L675.1 110.0 L676.9 108.8 L678.7 107.5 L680.6 106.2 L682.4 105.7 L684.3 105.9 L686.1 106.4 L688.0 107.1 L689.8 107.7 L691.7 108.3 L693.5 108.7 L695.4 109.1 L697.2 109.5 L699.0 109.8 L700.9 110.1 L702.7 110.3 L704.5 110.5 L706.4 110.8 L708.2 111.0 L710.1 111.3 L711.9 111.6 L713.8 112.0 L715.6 112.9 L717.5 114.5 L719.4 116.4 L721.2 118.0 L723.1 119.4 L724.9 120.9 L726.8 122.3 L728.6 123.6 L730.4 124.9 L732.3 126.0 L734.1 127.0 L736.0 127.8 L737.8 128.6 L739.6 129.4 L741.5 130.2 L743.3 131.0 L745.1 131.9 L747.0 132.8 L748.8 133.7 L750.7 134.6 L752.5 135.6 L754.4 136.5 L756.2 137.4 L758.1 138.4 L760.0 139.3 L761.8 140.3 L763.6 141.2 L765.5 142.1 L767.4 143.0 L769.2 143.9 L771.0 144.7 L772.9 145.5 L774.7 146.3 L776.5 147.1 L778.4 147.8 L780.2 148.5 L782.2 149.2 L784.1 149.9 L786.1 150.5 L788.0 151.2 L790.0 152.0 L791.8 152.9 L793.7 153.9 L795.5 155.0 L797.4 156.0 L799.2 157.1 L801.1 158.1 L802.9 159.1 L804.8 160.0 L806.6 161.1 L808.5 162.2 L810.3 163.6 L812.2 165.1 L814.0 166.7 L815.9 168.1 L817.7 169.1 L819.5 169.7 L821.4 170.3 L823.2 170.7 L825.1 171.1 L826.9 171.4 L828.8 171.6 L830.6 171.8 L832.5 171.9 L834.3 172.1 L836.2 172.3 L838.0 172.7 L839.9 173.3 L841.7 173.9 L843.6 174.6 L845.4 175.1 L847.2 175.5 L849.1 176.0 L850.9 176.4 L852.8 176.7 L854.6 176.9 L856.4 177.0 L858.2 177.1 L860.0 177.2 L861.8 177.4 L863.7 177.7 L865.5 178.0 L867.4 178.3 L869.2 178.6 L871.1 178.9 L872.9 179.3 L874.8 179.6 L876.6 180.0 L878.5 180.5 L880.3 181.0 L882.2 181.7 L884.0 182.5 L885.9 183.1 L887.7 183.7 L889.5 184.2 L891.4 184.6 L893.2 184.9 L895.1 185.3 L896.9 185.5 L898.8 185.8 L900.6 186.1 L902.5 186.4 L904.3 186.6 L906.2 186.8 L908.0 186.9 L909.9 187.0 L911.7 187.1 L913.6 187.1 L915.4 187.1 L917.2 187.2 L919.1 187.2 L920.9 187.3 L922.8 187.3 L924.6 187.4 L926.5 187.6 L928.3 188.0 L930.2 188.4 L932.0 188.8 L933.9 189.1 L935.7 189.2 L937.6 189.2 L939.4 189.2 L941.3 189.1 L943.1 188.9 L944.9 188.8 L946.8 188.4 L948.6 187.8 L950.5 187.1 L952.3 186.5 L954.3 185.9 L956.2 185.4 L958.1 184.9 L960.0 184.2 L961.5 183.2 L963.0 182.0 L965.0 180.7 L967.0 179.5 L969.0 178.4 L971.0 177.3 L972.9 176.3 L974.8 175.3 L976.6 174.4 L978.5 173.5 L980.4 172.7 L982.2 171.9 L984.1 171.1 L986.0 170.4 L988.0 169.6 L990.0 168.9 L992.0 168.1 L994.0 167.3 L995.9 166.4 L997.8 165.5 L999.6 164.5 L1001.5 163.5 L1003.4 162.5 L1005.2 161.5 L1007.1 160.5 L1009.0 159.6 L1011.0 158.8 L1013.0 158.0 L1015.0 157.3 L1017.0 156.5 L1018.9 155.6 L1020.8 154.5 L1022.7 153.6 L1024.6 153.0 L1026.4 152.6 L1028.3 152.3 L1030.2 152.1 L1032.0 152.0 L1034.0 152.3 L1036.0 153.0 L1038.0 153.8 L1040.0 154.5 L1041.9 155.0 L1043.8 155.4 L1045.8 155.9 L1047.7 156.2 L1049.3 156.4 L1050.8 156.6 L1052.4 156.8 L1054.0 157.0" stroke="#ffffff" fill="none" stroke-width="2.2" shape-rendering="crispEdges"/>
<path d="M969 147.5 L974 154 H970 V160 H968 V154 H964 Z" fill="#ff0000"/>
<path d="M1 450.5H1066" stroke="#a00000" stroke-dasharray="1 3"/>
<path d="M1 485.5H1066" stroke="#a00000" stroke-dasharray="1 3"/>
<path d="M1 521.5H1066" stroke="#a00000" stroke-dasharray="1 3"/>
<path d="M1 556.5H1066" stroke="#a00000" stroke-dasharray="1 3"/>
<path d="M1 591.5H1066" stroke="#a00000" stroke-dasharray="1 3"/>
<g><path d="M2.0 624.8 L4.0 624.6 L6.0 624.3 L8.0 624.0 L10.0 623.8 L12.0 623.7 L14.0 623.5 L16.0 623.4 L18.0 623.3 L20.0 623.1 L21.9 623.0 L23.8 622.9 L25.6 622.7 L27.5 622.6 L29.4 622.4 L31.2 622.3 L33.1 622.2 L35.0 622.1 L37.0 622.0 L39.0 621.9 L41.0 621.9 L43.0 621.8 L45.0 621.7 L47.0 621.7 L49.0 621.6 L51.0 621.6 L53.0 621.5 L55.0 621.4 L56.9 621.3 L58.8 621.3 L60.6 621.2 L62.5 621.1 L64.4 621.0 L66.2 620.9 L68.1 620.8 L70.0 620.7 L72.0 620.7 L74.0 620.6 L76.0 620.5 L78.0 620.4 L80.0 620.4 L82.0 620.3 L84.0 620.2 L86.0 620.2 L88.0 620.1 L90.0 620.0 L92.0 620.0 L94.0 619.9 L96.0 619.9 L98.0 619.8 L100.0 619.8 L102.0 619.7 L104.0 619.6 L106.0 619.6 L108.0 619.5 L110.0 619.4 L111.9 619.4 L113.9 619.3 L115.9 619.2 L117.9 619.1 L119.9 619.0 L121.9 619.0 L123.9 618.9 L125.9 618.8 L127.9 618.7 L129.9 618.6 L131.8 618.5 L133.8 618.4 L135.8 618.2 L137.8 618.1 L139.8 618.0 L141.8 617.9 L143.8 617.7 L145.8 617.5 L147.8 617.3 L149.8 617.1 L151.7 616.9 L153.7 616.6 L155.7 616.4 L157.7 616.1 L159.7 615.8 L161.7 615.5 L163.7 615.3 L165.7 615.0 L167.7 614.7 L169.7 614.4 L171.6 614.1 L173.6 613.8 L175.6 613.6 L177.6 613.3 L179.6 613.1 L181.6 612.8 L183.6 612.6 L185.6 612.3 L187.6 612.1 L189.6 611.8 L191.6 611.6 L193.6 611.3 L195.6 611.1 L197.6 610.8 L199.6 610.5 L201.5 610.3 L203.5 610.0 L205.5 609.8 L207.5 609.6 L209.5 609.3 L211.5 609.1 L213.5 608.8 L215.5 608.6 L217.5 608.4 L219.5 608.1 L221.5 607.9 L223.5 607.7 L225.5 607.5 L227.5 607.3 L229.4 607.0 L231.4 606.8 L233.4 606.6 L235.4 606.4 L237.4 606.2 L239.4 606.0 L241.4 605.8 L243.4 605.6 L245.4 605.4 L247.4 605.2 L249.4 605.0 L251.3 604.8 L253.3 604.6 L255.3 604.4 L257.3 604.2 L259.3 604.0 L261.3 603.7 L263.3 603.5 L265.3 603.3 L267.3 603.0 L269.2 602.8 L271.2 602.6 L273.2 602.3 L275.2 602.1 L277.2 601.9 L279.2 601.6 L281.2 601.4 L283.2 601.1 L285.2 600.9 L287.2 600.7 L289.2 600.5 L291.1 600.2 L293.1 600.0 L295.1 599.8 L297.1 599.6 L299.1 599.4 L301.1 599.3 L303.1 599.1 L305.1 598.9 L307.1 598.7 L309.1 598.6 L311.0 598.4 L313.0 598.3 L315.0 598.1 L317.0 598.0 L319.0 597.8 L321.0 597.7 L323.0 597.5 L325.0 597.4 L327.0 597.2 L328.9 597.1 L330.9 596.9 L332.9 596.8 L334.9 596.6 L336.9 596.5 L338.9 596.4 L340.8 596.2 L342.7 596.1 L344.6 595.9 L346.5 595.8 L348.4 595.7 L350.3 595.6 L352.2 595.4 L354.1 595.3 L356.0 595.2 L357.9 595.0 L359.8 594.9 L361.7 594.8 L363.6 594.6 L365.5 594.5 L367.5 594.4 L369.5 594.2 L371.4 594.1 L373.4 594.0 L375.4 593.8 L377.4 593.7 L379.3 593.5 L381.3 593.4 L383.3 593.3 L385.3 593.1 L387.2 593.0 L389.2 592.9 L391.2 592.7 L393.2 592.6 L395.2 592.4 L397.1 592.3 L399.1 592.2 L401.1 592.0 L403.1 591.9 L405.0 591.7 L407.0 591.5 L409.0 591.4 L411.0 591.2 L412.9 591.0 L414.9 590.9 L416.9 590.7 L418.8 590.5 L420.8 590.3 L422.7 590.1 L424.7 589.8 L426.6 589.6 L428.6 589.3 L430.5 589.1 L432.5 588.8 L434.4 588.6 L436.4 588.3 L438.3 588.0 L440.3 587.8 L442.2 587.5 L444.2 587.2 L446.1 587.0 L448.1 586.7 L450.0 586.5 L452.0 586.2 L453.9 586.0 L455.8 585.8 L457.8 585.6 L459.7 585.4 L461.7 585.2 L463.6 585.0 L465.6 584.8 L467.5 584.6 L469.4 584.4 L471.4 584.2 L473.3 584.0 L475.3 583.9 L477.2 583.7 L479.1 583.5 L481.1 583.3 L483.0 583.1 L485.0 582.9 L486.9 582.7 L488.9 582.5 L490.8 582.2 L492.7 582.0 L494.7 581.8 L496.6 581.5 L498.6 581.3 L500.5 581.0 L502.5 580.8 L504.4 580.5 L506.3 580.3 L508.3 580.0 L510.2 579.7 L512.2 579.5 L514.1 579.2 L516.0 578.9 L518.0 578.7 L519.9 578.4 L521.9 578.1 L523.8 577.9 L525.8 577.6 L527.7 577.4 L529.6 577.1 L531.6 576.9 L533.5 576.7 L535.5 576.5 L537.4 576.3 L539.4 576.1 L541.3 575.9 L543.3 575.7 L545.2 575.5 L547.2 575.2 L549.1 575.0 L551.1 574.8 L553.0 574.6 L555.0 574.4 L556.9 574.1 L558.9 573.9 L560.8 573.6 L562.8 573.3 L564.7 573.0 L566.6 572.7 L568.4 572.2 L570.3 571.8 L572.1 571.3 L574.0 570.8 L575.8 570.3 L577.7 569.9 L579.6 569.5 L581.5 569.1 L583.4 568.7 L585.3 568.4 L587.2 568.1 L589.1 567.8 L591.0 567.4 L592.8 567.1 L594.7 566.8 L596.6 566.4 L598.5 566.1 L600.4 565.8 L602.3 565.4 L604.2 565.0 L606.1 564.6 L608.0 564.1 L609.9 563.7 L611.8 563.2 L613.7 562.7 L615.6 562.2 L617.5 561.7 L619.4 561.2 L621.3 560.7 L623.2 560.2 L625.1 559.7 L627.0 559.2 L628.9 558.8 L630.8 558.3 L632.8 557.9 L634.7 557.5 L636.7 557.1 L638.7 556.7 L640.6 556.3 L642.6 555.9 L644.6 555.5 L646.5 555.1 L648.5 554.7 L650.5 554.3 L652.4 553.8 L654.4 553.3 L656.4 552.8 L658.3 552.4 L660.3 551.9 L662.3 551.4 L664.2 550.9 L666.2 550.5 L668.2 550.0 L670.1 549.6 L672.1 549.2 L674.1 548.8 L676.0 548.4 L678.0 548.0 L680.0 547.6 L681.9 547.2 L683.9 546.8 L685.9 546.5 L687.8 546.1 L689.8 545.8 L691.8 545.4 L693.7 545.1 L695.7 544.8 L697.7 544.4 L699.6 544.1 L701.6 543.8 L703.6 543.5 L705.5 543.2 L707.5 542.9 L709.5 542.7 L711.4 542.4 L713.4 542.1 L715.4 541.9 L717.3 541.6 L719.3 541.4 L721.3 541.1 L723.2 540.9 L725.2 540.7 L727.2 540.5 L729.1 540.3 L731.1 540.1 L733.1 539.9 L735.0 539.8 L737.0 539.6 L738.9 539.4 L740.8 539.3 L742.8 539.1 L744.7 539.0 L746.6 538.9 L748.5 538.8 L750.4 538.6 L752.3 538.5 L754.2 538.4 L756.2 538.2 L758.1 538.1 L760.0 537.9 L761.9 537.8 L763.8 537.6 L765.7 537.5 L767.6 537.3 L769.5 537.1 L771.4 536.9 L773.2 536.7 L775.1 536.6 L777.0 536.4 L778.9 536.2 L780.8 536.0 L782.7 535.9 L784.6 535.7 L786.5 535.5 L788.4 535.4 L790.3 535.3 L792.2 535.1 L794.1 535.0 L796.0 534.9 L797.9 534.7 L799.8 534.6 L801.6 534.5 L803.5 534.3 L805.4 534.2 L807.3 534.1 L809.2 534.0 L811.1 533.9 L813.0 533.8 L814.9 533.7 L816.8 533.5 L818.7 533.4 L820.6 533.3 L822.5 533.2 L824.4 533.1 L826.3 533.0 L828.2 532.9 L830.1 532.8 L832.0 532.7 L833.9 532.6 L835.8 532.5 L837.7 532.4 L839.6 532.3 L841.5 532.2 L843.4 532.1 L845.3 532.0 L847.2 531.9 L849.1 531.9 L851.0 531.8 L852.9 531.7 L854.8 531.6 L856.7 531.5 L858.6 531.4 L860.5 531.3 L862.4 531.2 L864.3 531.1 L866.2 531.0 L868.1 530.9 L870.0 530.8 L871.9 530.7 L873.8 530.6 L875.7 530.5 L877.6 530.4 L879.5 530.3 L881.3 530.2 L883.2 530.1 L885.1 530.0 L887.0 529.9 L888.9 529.8 L890.8 529.7 L892.7 529.6 L894.6 529.5 L896.5 529.4 L898.4 529.3 L900.3 529.2 L902.2 529.1 L904.1 529.0 L906.0 528.9 L907.9 528.8 L909.8 528.7 L911.7 528.6 L913.6 528.6 L915.5 528.5 L917.4 528.4 L919.3 528.3 L921.2 528.2 L923.1 528.1 L925.0 528.0 L926.9 527.9 L928.8 527.9 L930.7 527.8 L932.5 527.7 L934.4 527.6 L936.3 527.5 L938.2 527.4 L940.1 527.4 L942.0 527.3 L943.9 527.2 L945.8 527.1 L947.7 526.9 L949.6 526.8 L951.5 526.7 L953.4 526.6 L955.3 526.4 L957.2 526.3 L959.1 526.1 L961.0 526.0 L962.9 525.8 L964.8 525.7 L966.7 525.5 L968.6 525.3 L970.5 525.2 L972.4 525.0 L974.3 524.8 L976.2 524.7 L978.1 524.5 L980.0 524.3 L981.9 524.1 L983.8 523.9 L985.6 523.8 L987.5 523.6 L989.4 523.4 L991.3 523.2 L993.2 522.9 L995.1 522.7 L997.0 522.5 L998.9 522.3 L1000.8 522.0 L1002.7 521.7 L1004.6 521.4 L1006.5 521.0 L1008.4 520.7 L1010.3 520.4 L1012.2 520.1 L1014.1 519.9 L1016.0 519.6 L1017.9 519.4 L1019.8 519.2 L1021.7 519.0 L1023.6 518.8 L1025.5 518.6 L1027.4 518.5 L1029.3 518.4 L1031.2 518.3 L1033.1 518.2 L1035.0 518.1 L1036.9 518.0 L1038.8 517.9 L1040.6 517.9 L1042.5 517.8 L1044.4 517.7 L1046.3 517.6 L1048.2 517.6 L1050.1 517.5 L1052.0 517.4" stroke="#0000ff" fill="none" stroke-width="1" shape-rendering="crispEdges"/>
<path d="M2.0 612.5 L3.9 612.4 L5.7 612.2 L7.6 612.1 L9.4 611.9 L11.3 611.8 L13.1 611.6 L15.0 611.5 L16.9 611.3 L18.8 611.2 L20.6 611.0 L22.5 610.8 L24.4 610.6 L26.2 610.4 L28.1 610.3 L30.0 610.1 L31.9 610.0 L33.8 609.8 L35.6 609.7 L37.5 609.6 L39.4 609.4 L41.2 609.3 L43.1 609.2 L45.0 609.1 L46.9 609.0 L48.8 608.9 L50.6 608.8 L52.5 608.7 L54.4 608.7 L56.2 608.6 L58.1 608.5 L60.0 608.4 L62.0 608.3 L64.0 608.1 L66.0 608.0 L68.0 607.9 L70.0 607.8 L72.0 607.7 L73.9 607.7 L75.8 607.7 L77.7 607.7 L79.6 607.7 L81.5 607.7 L83.4 607.7 L85.3 607.7 L87.2 607.7 L89.1 607.7 L91.0 607.7 L92.8 607.7 L94.6 607.7 L96.4 607.7 L98.2 607.7 L100.0 607.7 L102.0 607.6 L104.0 607.6 L106.0 607.5 L108.0 607.4 L110.0 607.3 L112.0 607.2 L114.0 607.1 L116.0 607.0 L117.8 606.9 L119.7 606.8 L121.5 606.7 L123.3 606.6 L125.2 606.5 L127.0 606.4 L128.8 606.2 L130.5 606.0 L132.2 605.8 L134.0 605.6 L135.8 605.4 L137.5 605.3 L139.2 605.1 L141.0 605.0 L142.8 604.8 L144.5 604.6 L146.2 604.4 L148.0 604.2 L149.7 604.0 L151.3 603.8 L153.0 603.6 L155.0 603.2 L157.0 602.9 L158.5 602.7 L160.0 602.6 L161.8 602.3 L163.5 602.0 L165.2 601.5 L167.0 601.1 L168.8 600.6 L170.5 600.1 L172.5 599.5 L174.4 598.8 L176.4 598.0 L178.4 597.2 L180.3 596.6 L182.3 596.1 L184.1 595.8 L185.9 595.5 L187.7 595.3 L189.4 595.1 L191.2 594.9 L193.0 594.6 L194.8 594.4 L196.6 594.0 L198.4 593.7 L200.2 593.4 L202.0 593.1 L203.8 592.8 L205.6 592.5 L207.4 592.3 L209.2 592.0 L211.0 591.8 L212.8 591.5 L214.6 591.3 L216.4 591.0 L218.2 590.8 L220.0 590.5 L221.8 590.3 L223.6 590.1 L225.4 589.8 L227.2 589.6 L229.0 589.5 L230.8 589.3 L232.5 589.1 L234.3 588.9 L236.1 588.7 L238.1 588.4 L240.1 588.2 L242.1 587.9 L244.0 587.7 L246.0 587.4 L248.0 587.1 L250.0 586.9 L251.8 586.7 L253.6 586.5 L255.4 586.4 L257.2 586.2 L259.0 586.0 L260.8 585.8 L262.6 585.5 L264.4 585.2 L266.1 584.9 L267.9 584.5 L269.7 584.2 L271.5 584.0 L273.3 583.7 L275.1 583.6 L276.9 583.4 L278.7 583.2 L280.5 583.0 L282.3 582.9 L284.1 582.7 L285.9 582.5 L287.6 582.3 L289.4 582.1 L291.2 582.0 L293.0 581.8 L294.8 581.6 L296.6 581.4 L298.4 581.2 L300.2 581.1 L302.0 580.9 L303.8 580.7 L305.6 580.5 L307.4 580.2 L309.2 580.0 L311.0 579.7 L312.8 579.4 L314.6 579.2 L316.3 578.9 L318.1 578.6 L319.8 578.2 L321.5 577.9 L323.3 577.7 L325.0 577.6 L326.9 577.6 L328.9 577.6 L330.8 577.6 L332.8 577.6 L334.7 577.6 L336.1 577.3 L337.6 576.6 L339.0 576.2 L341.0 575.9 L343.0 575.7 L345.0 575.6 L347.0 575.4 L349.0 575.3 L351.0 575.1 L353.0 574.9 L354.8 574.7 L356.6 574.4 L358.4 574.2 L360.3 574.0 L362.2 573.9 L364.2 573.8 L366.1 573.6 L368.1 573.4 L369.5 573.2 L370.9 572.9 L372.4 572.7 L374.3 572.5 L376.2 572.4 L378.2 572.3 L380.1 572.1 L382.1 572.0 L383.5 571.8 L384.9 571.6 L386.4 571.4 L388.3 571.3 L390.2 571.1 L392.2 571.0 L394.1 570.9 L396.0 570.7 L397.8 570.5 L399.6 570.2 L401.4 570.0 L403.2 569.8 L405.0 569.8 L406.7 569.8 L408.3 569.9 L410.0 570.0 L411.8 569.7 L413.6 569.0 L415.4 568.4 L417.3 567.9 L419.2 567.4 L421.1 567.0 L423.0 566.6 L424.9 566.3 L426.9 566.0 L428.9 565.7 L430.8 565.5 L432.7 565.2 L434.6 564.8 L436.6 564.5 L438.5 564.2 L440.4 563.9 L442.2 563.7 L444.1 563.4 L446.0 563.1 L447.9 562.8 L449.9 562.5 L451.9 562.2 L453.8 561.8 L455.4 561.6 L456.9 561.4 L458.4 561.2 L460.0 561.0 L461.9 560.8 L463.9 560.6 L465.8 560.3 L467.7 560.1 L469.6 559.9 L471.6 559.7 L473.5 559.5 L475.4 559.2 L477.3 559.0 L479.2 558.8 L481.2 558.6 L483.1 558.4 L485.0 558.2 L486.9 558.0 L488.9 557.7 L490.8 557.5 L492.7 557.3 L494.5 557.1 L496.4 556.9 L498.2 556.7 L500.1 556.5 L501.9 556.3 L503.8 556.1 L505.6 555.9 L507.4 555.7 L509.3 555.4 L511.1 555.1 L513.0 554.8 L514.8 554.5 L516.7 554.1 L518.5 553.8 L520.3 553.4 L522.2 553.0 L524.0 552.6 L525.9 552.2 L527.7 551.8 L529.6 551.4 L531.4 551.0 L533.2 550.6 L535.1 550.1 L537.0 549.7 L538.8 549.2 L540.7 548.8 L542.5 548.3 L544.4 547.9 L546.2 547.5 L548.2 547.0 L550.1 546.6 L552.1 546.1 L554.1 545.7 L556.1 545.2 L558.0 544.8 L560.0 544.4 L562.0 544.0 L563.9 543.6 L565.9 543.2 L567.9 542.8 L569.8 542.4 L571.8 542.1 L573.8 541.6 L575.7 541.2 L577.7 540.7 L579.7 540.2 L581.6 539.7 L583.6 539.1 L585.6 538.6 L587.5 537.9 L589.5 537.3 L591.5 536.7 L593.4 536.0 L595.4 535.3 L597.4 534.7 L599.3 533.9 L601.3 533.2 L603.2 532.4 L605.2 531.7 L607.1 530.9 L609.1 530.1 L611.0 529.4 L613.0 528.6 L615.0 527.9 L617.0 527.1 L618.9 526.4 L620.9 525.6 L622.9 524.9 L624.9 524.2 L626.8 523.4 L628.8 522.7 L630.8 522.0 L632.8 521.3 L634.8 520.6 L636.8 519.8 L638.8 519.1 L640.8 518.4 L642.8 517.7 L644.8 517.0 L646.8 516.3 L648.8 515.6 L650.8 515.0 L652.8 514.3 L654.8 513.6 L656.8 512.9 L658.8 512.3 L660.8 511.6 L662.8 510.9 L664.7 510.3 L666.7 509.6 L668.6 509.0 L670.6 508.3 L672.5 507.7 L674.5 507.1 L676.4 506.5 L678.4 505.9 L680.3 505.4 L682.3 504.9 L684.1 504.5 L685.9 504.1 L687.7 503.8 L689.5 503.5 L691.4 503.2 L693.2 502.8 L695.0 502.4 L696.9 501.9 L698.8 501.3 L700.8 500.6 L702.7 500.1 L704.6 499.7 L706.4 499.5 L708.3 499.4 L710.1 499.2 L712.0 499.1 L713.8 499.0 L715.6 498.9 L717.5 498.8 L719.3 498.7 L721.2 498.6 L723.0 498.5 L725.0 498.4 L727.0 498.2 L728.9 498.1 L730.9 497.9 L732.9 497.8 L734.9 497.6 L736.9 497.5 L738.8 497.3 L740.8 497.2 L742.8 497.0 L744.8 496.9 L746.7 496.8 L748.7 496.7 L750.7 496.6 L752.5 496.5 L754.4 496.4 L756.2 496.3 L758.0 496.2 L759.9 496.2 L761.7 496.1 L763.5 496.0 L765.3 496.0 L767.2 496.0 L769.0 496.0 L770.9 496.0 L772.8 496.0 L774.7 496.0 L776.6 496.0 L778.5 496.1 L780.5 496.1 L782.4 496.1 L784.3 496.1 L786.2 496.2 L788.1 496.2 L790.0 496.2 L791.9 496.2 L793.8 496.2 L795.6 496.2 L797.5 496.2 L799.4 496.2 L801.2 496.2 L803.1 496.2 L805.0 496.2 L807.0 496.8 L809.0 496.8 L810.9 496.8 L812.9 496.8 L814.9 496.8 L816.8 496.8 L818.8 496.8 L820.7 496.8 L822.7 496.8 L824.7 496.8 L826.6 496.7 L828.6 496.7 L830.6 496.7 L832.5 496.7 L834.5 496.7 L836.4 496.7 L838.4 496.7 L840.4 496.7 L842.3 496.7 L844.3 496.7 L846.3 496.7 L848.2 496.7 L850.2 496.7 L852.1 496.7 L854.1 496.7 L856.1 496.7 L858.0 496.7 L860.0 496.7 L861.8 496.7 L863.7 496.7 L865.5 496.7 L867.4 496.7 L869.2 496.7 L871.1 496.8 L872.9 496.8 L874.8 496.8 L876.6 496.9 L878.5 496.9 L880.3 496.9 L882.2 497.0 L884.1 497.0 L886.1 497.0 L888.1 497.1 L890.1 497.1 L892.1 497.1 L894.1 497.2 L896.1 497.2 L898.1 497.3 L900.1 497.3 L902.0 497.4 L904.0 497.5 L906.0 497.5 L908.0 497.6 L909.9 498.1 L911.8 498.1 L913.7 498.1 L915.7 498.1 L917.6 498.1 L919.5 498.1 L921.4 498.1 L923.4 498.1 L925.3 498.1 L927.2 498.1 L929.2 498.1 L931.1 498.1 L933.0 498.1 L935.0 498.1 L936.9 498.1 L938.8 498.1 L940.8 498.1 L942.7 498.1 L944.6 498.1 L946.5 498.1 L948.5 498.1 L950.4 498.1 L952.3 498.1 L953.7 497.8 L955.0 497.5 L957.0 497.2 L959.0 497.0 L961.0 496.9 L963.0 496.7 L965.0 496.4 L967.0 496.1 L969.0 495.8 L971.0 495.4 L973.0 495.0 L975.0 494.7 L977.0 494.5 L979.0 494.3 L981.0 494.2 L983.0 494.0 L985.0 493.8 L987.0 493.7 L989.0 493.5 L991.0 493.4 L993.0 493.2 L995.0 493.0 L997.0 492.8 L999.0 492.6 L1001.0 492.4 L1003.0 492.1 L1005.0 491.9 L1007.0 491.6 L1009.0 491.4 L1011.0 491.1 L1013.0 490.9 L1015.0 490.6 L1017.0 490.4 L1019.0 490.1 L1021.0 489.8 L1023.0 489.5 L1025.0 489.3 L1027.0 489.0 L1029.0 488.7 L1031.0 488.5 L1033.0 488.4 L1035.0 488.4 L1037.0 488.4 L1039.0 488.4 L1041.0 488.4 L1043.0 488.4 L1045.0 488.4 L1047.0 488.4 L1049.0 488.4 L1051.0 488.4 L1053.0 488.4" stroke="#58c8f8" fill="none" stroke-width="1" shape-rendering="crispEdges"/>
<path d="M2.0 607.7 L4.0 607.5 L6.0 607.3 L8.0 607.1 L10.0 606.9 L12.0 606.7 L13.9 606.5 L15.7 606.4 L17.6 606.2 L19.4 606.0 L21.3 605.9 L23.1 605.8 L25.0 605.7 L26.9 605.6 L28.8 605.5 L30.8 605.4 L32.7 605.3 L34.6 605.2 L36.5 605.2 L38.5 605.1 L40.4 605.0 L42.3 605.0 L44.2 604.9 L46.2 604.8 L48.1 604.7 L50.0 604.6 L52.0 604.5 L54.0 604.4 L56.0 604.2 L58.0 604.1 L60.0 603.9 L62.0 603.7 L64.0 603.6 L66.0 603.5 L68.0 603.4 L70.0 603.3 L72.0 603.3 L74.0 603.3 L76.0 603.3 L78.0 603.3 L80.0 603.3 L82.0 603.3 L84.0 603.3 L86.0 603.3 L88.0 603.3 L89.5 603.4 L91.0 603.6 L92.8 603.6 L94.6 603.6 L96.4 603.6 L98.2 603.6 L100.0 603.6 L102.0 603.6 L104.0 603.5 L106.0 603.5 L108.0 603.4 L110.0 603.2 L112.0 603.1 L114.0 603.0 L116.0 602.9 L118.0 602.7 L120.0 602.5 L122.0 602.4 L124.0 602.2 L126.0 602.0 L128.0 601.8 L130.0 601.7 L132.0 601.5 L133.8 601.3 L135.5 601.2 L137.2 601.0 L139.0 600.8 L140.5 600.6 L142.0 600.4 L143.5 600.2 L145.0 600.0 L146.5 599.7 L148.0 599.5 L149.7 599.3 L151.3 599.1 L153.0 598.8 L155.0 598.4 L157.0 598.1 L158.5 597.9 L160.0 597.8 L161.9 597.4 L163.8 596.9 L165.8 596.2 L167.7 595.5 L169.6 594.8 L171.5 594.2 L173.3 593.7 L175.1 593.2 L176.9 592.7 L178.7 592.2 L180.5 591.8 L182.3 591.3 L184.0 590.8 L185.8 590.4 L187.5 589.9 L189.3 589.5 L191.0 589.1 L192.8 588.7 L194.7 588.3 L196.5 587.9 L198.3 587.5 L200.1 587.2 L202.0 586.8 L203.8 586.5 L205.6 586.2 L207.4 585.8 L209.2 585.5 L211.0 585.2 L212.8 584.9 L214.6 584.6 L216.4 584.4 L218.2 584.1 L220.0 583.9 L221.8 583.7 L223.6 583.4 L225.4 583.2 L227.2 583.0 L229.0 582.7 L230.8 582.5 L232.5 582.2 L234.3 582.0 L236.1 581.7 L238.1 581.4 L240.1 581.1 L242.1 580.8 L244.0 580.5 L246.0 580.2 L248.0 579.9 L250.0 579.6 L251.8 579.3 L253.6 579.1 L255.4 578.8 L257.2 578.6 L259.0 578.3 L260.8 578.1 L262.6 577.8 L264.4 577.5 L266.1 577.2 L267.9 576.9 L269.7 576.6 L271.5 576.4 L273.3 576.2 L275.1 576.0 L276.9 575.9 L278.7 575.8 L280.5 575.6 L282.3 575.5 L284.1 575.3 L285.9 575.1 L287.6 575.0 L289.4 574.8 L291.2 574.6 L293.0 574.4 L294.8 574.2 L296.6 573.9 L298.4 573.7 L300.2 573.5 L302.0 573.2 L303.8 572.9 L305.6 572.6 L307.4 572.2 L309.2 571.8 L311.0 571.6 L312.8 571.4 L314.6 571.2 L316.4 571.1 L318.2 570.9 L320.0 570.7 L321.7 570.4 L323.3 570.2 L325.0 570.0 L326.8 569.8 L328.6 569.6 L330.4 569.4 L332.1 569.2 L333.8 569.1 L335.5 569.0 L337.3 568.8 L339.0 568.6 L340.8 568.4 L342.6 568.1 L344.4 567.9 L346.1 567.7 L347.8 567.6 L349.5 567.5 L351.3 567.3 L353.0 567.2 L354.8 567.0 L356.6 566.8 L358.4 566.6 L360.3 566.4 L362.2 566.3 L364.2 566.2 L366.1 566.0 L368.1 565.8 L369.5 565.7 L370.9 565.5 L372.4 565.3 L374.3 565.2 L376.2 565.0 L378.2 564.9 L380.1 564.8 L382.1 564.6 L383.5 564.4 L384.9 564.1 L386.4 563.9 L388.3 563.7 L390.2 563.5 L392.2 563.4 L394.1 563.3 L396.0 563.1 L397.8 562.9 L399.6 562.8 L401.4 562.6 L403.2 562.5 L405.0 562.4 L406.7 562.3 L408.3 562.2 L410.0 562.0 L411.8 561.8 L413.6 561.6 L415.4 561.3 L417.3 560.9 L419.2 560.4 L421.1 559.9 L423.0 559.4 L424.9 559.0 L426.9 558.5 L428.9 558.0 L430.8 557.6 L432.7 557.2 L434.6 556.8 L436.6 556.4 L438.5 556.0 L440.4 555.7 L442.2 555.3 L444.1 555.0 L446.0 554.7 L447.9 554.4 L449.9 554.1 L451.9 553.9 L453.8 553.6 L455.4 553.4 L456.9 553.3 L458.4 553.1 L460.0 552.9 L461.8 552.5 L463.5 552.1 L465.3 551.6 L467.0 551.2 L468.8 550.7 L470.5 550.3 L472.3 550.0 L474.2 549.7 L476.0 549.5 L477.9 549.3 L479.7 549.1 L481.6 548.9 L483.4 548.8 L485.2 548.6 L487.1 548.4 L488.9 548.2 L490.8 548.1 L492.7 547.9 L494.5 547.8 L496.4 547.6 L498.2 547.5 L500.1 547.3 L501.9 547.2 L503.8 547.0 L505.6 546.8 L507.4 546.6 L509.3 546.4 L511.1 546.2 L513.0 545.9 L514.8 545.6 L516.7 545.3 L518.5 544.9 L520.3 544.5 L522.2 544.1 L524.0 543.8 L525.9 543.4 L527.7 543.0 L529.6 542.7 L531.4 542.3 L533.2 542.0 L535.1 541.6 L537.0 541.2 L538.8 540.9 L540.7 540.5 L542.5 540.1 L544.4 539.7 L546.2 539.2 L548.1 538.8 L549.9 538.2 L551.8 537.6 L553.6 537.0 L555.5 536.4 L557.3 535.8 L559.2 535.2 L561.0 534.6 L562.9 534.1 L564.7 533.6 L566.6 533.1 L568.5 532.7 L570.4 532.3 L572.4 532.0 L574.3 531.6 L576.2 531.2 L578.1 530.8 L580.0 530.3 L581.9 529.8 L583.9 529.2 L585.8 528.6 L587.7 527.9 L589.6 527.2 L591.5 526.5 L593.5 525.8 L595.4 525.0 L597.2 524.3 L599.0 523.5 L600.7 522.7 L602.5 521.8 L604.3 521.0 L606.0 520.1 L607.8 519.2 L609.6 518.4 L611.4 517.5 L613.2 516.5 L614.9 515.6 L616.7 514.7 L618.5 513.7 L620.3 512.8 L622.1 511.8 L623.8 510.9 L625.6 510.0 L627.4 509.1 L629.2 508.2 L630.9 507.4 L632.7 506.7 L634.7 506.0 L636.6 505.4 L638.6 504.8 L640.6 504.2 L642.5 503.7 L644.5 503.1 L646.5 502.5 L648.4 501.9 L650.4 501.2 L652.2 500.6 L653.9 499.8 L655.7 499.0 L657.5 498.2 L659.2 497.4 L661.0 496.6 L662.8 495.9 L664.6 495.2 L666.3 494.5 L668.1 493.9 L669.9 493.3 L671.6 492.7 L673.4 492.1 L675.2 491.5 L676.9 490.8 L678.7 490.1 L680.5 489.5 L682.3 488.9 L684.0 488.5 L685.9 488.2 L687.7 487.9 L689.5 487.7 L691.3 487.5 L693.2 487.3 L695.0 487.1 L696.9 486.8 L698.8 486.4 L700.7 486.1 L702.6 485.7 L704.4 485.3 L706.3 485.0 L708.2 484.8 L710.1 484.6 L712.0 484.5 L714.0 484.5 L716.0 484.5 L718.0 484.5 L720.0 484.5 L722.0 484.5 L724.0 484.4 L726.0 484.4 L728.0 484.4 L730.0 484.4 L732.0 484.4 L734.0 484.4 L736.0 484.4 L738.0 484.4 L740.0 484.4 L742.0 484.4 L744.0 484.3 L746.0 484.3 L748.0 484.3 L750.0 484.3 L752.0 484.3 L754.0 484.3 L756.0 484.3 L758.0 484.3 L760.0 484.3 L762.0 484.3 L764.0 484.3 L766.0 484.3 L768.0 484.3 L770.0 484.3 L772.0 484.3 L774.0 484.4 L776.0 484.4 L778.0 484.4 L780.0 484.4 L782.0 484.4 L784.0 484.4 L786.0 484.4 L788.0 484.4 L790.0 484.5 L791.8 484.5 L793.7 484.7 L795.5 485.0 L797.4 485.2 L799.2 485.4 L801.1 485.6 L802.9 485.8 L804.8 486.0 L806.6 486.1 L808.5 486.3 L810.3 486.5 L812.2 486.6 L814.0 486.8 L815.9 487.0 L817.7 487.1 L819.5 487.3 L821.4 487.4 L823.2 487.6 L825.1 487.7 L826.9 487.8 L828.8 487.9 L830.6 488.0 L832.4 488.0 L834.3 488.1 L836.1 488.1 L838.0 488.2 L839.9 488.2 L841.7 488.3 L843.5 488.4 L845.4 488.4 L847.2 488.5 L849.0 488.6 L850.9 488.7 L852.7 488.7 L854.5 488.8 L856.4 488.9 L858.2 489.0 L860.0 489.1 L861.8 489.1 L863.7 489.2 L865.5 489.3 L867.4 489.3 L869.2 489.4 L871.1 489.5 L872.9 489.5 L874.8 489.6 L876.6 489.7 L878.5 489.8 L880.3 490.0 L882.2 490.3 L884.0 490.5 L885.9 490.7 L887.5 490.8 L889.2 490.9 L890.9 491.0 L892.6 491.1 L894.3 491.2 L896.0 491.3 L898.0 491.4 L900.0 491.5 L901.9 491.6 L903.9 491.7 L905.9 491.8 L907.9 491.8 L909.9 491.9 L911.8 492.0 L913.7 492.1 L915.7 492.2 L917.6 492.3 L919.6 492.4 L921.5 492.5 L923.4 492.6 L925.4 492.6 L927.3 492.7 L929.3 492.7 L931.2 492.7 L933.2 492.7 L935.2 492.7 L937.2 492.6 L939.2 492.6 L941.1 492.6 L943.1 492.6 L945.1 492.5 L947.1 492.5 L949.1 492.5 L951.0 492.4 L953.0 492.4 L955.0 492.3 L957.0 492.2 L959.0 492.1 L961.0 491.8 L963.0 491.6 L965.0 491.2 L967.0 490.9 L969.0 490.6 L971.0 490.2 L973.0 489.9 L975.0 489.6 L977.0 489.3 L979.0 489.0 L981.0 488.7 L983.0 488.4 L985.0 488.2 L987.0 488.1 L989.0 487.9 L991.0 487.8 L993.0 487.7 L995.0 487.5 L997.0 487.3 L999.0 487.0 L1001.0 486.7 L1003.0 486.4 L1005.0 486.2 L1007.0 486.0 L1009.0 485.8 L1011.0 485.6 L1013.0 485.4 L1015.0 485.1 L1017.0 484.9 L1019.0 484.7 L1021.0 484.4 L1023.0 484.1 L1025.0 483.8 L1026.5 483.4 L1028.0 483.1 L1029.9 483.1 L1031.8 483.1 L1033.8 483.1 L1035.7 483.1 L1037.6 483.1 L1039.5 483.1 L1041.5 483.1 L1043.4 483.1 L1045.3 483.1 L1047.2 483.1 L1049.2 483.1 L1051.1 483.1 L1053.0 483.1" stroke="#ffff00" fill="none" stroke-width="1" shape-rendering="crispEdges"/>
<path d="M2.0 602.2 L4.0 602.1 L6.0 601.9 L8.0 601.7 L10.0 601.5 L12.0 601.3 L14.0 601.1 L16.0 601.0 L18.0 600.8 L20.0 600.7 L22.0 600.5 L24.0 600.4 L26.0 600.3 L28.0 600.1 L30.0 600.0 L32.0 599.8 L34.0 599.7 L36.0 599.6 L38.0 599.4 L40.0 599.3 L42.0 599.2 L44.0 599.0 L46.0 598.9 L48.0 598.8 L50.0 598.7 L52.0 598.6 L54.0 598.4 L56.0 598.3 L58.0 598.2 L60.0 598.2 L62.0 598.1 L64.0 598.0 L66.0 597.9 L68.0 597.9 L70.0 597.8 L72.0 597.7 L73.7 597.5 L75.3 597.3 L77.0 597.2 L78.8 597.3 L80.6 597.6 L82.4 597.9 L84.2 598.3 L86.0 598.5 L88.0 598.6 L90.0 598.7 L92.0 598.8 L94.0 599.0 L96.0 599.2 L98.0 599.4 L100.0 599.5 L101.9 599.5 L103.8 599.4 L105.6 599.3 L107.5 599.2 L109.4 599.1 L111.2 599.0 L113.1 598.9 L115.0 598.8 L116.9 598.7 L118.8 598.7 L120.6 598.6 L122.5 598.5 L124.4 598.5 L126.2 598.4 L128.1 598.3 L130.0 598.2 L132.0 598.0 L134.0 597.7 L135.7 597.4 L137.3 597.1 L139.0 596.8 L140.5 596.6 L142.0 596.3 L143.5 596.1 L145.0 595.9 L146.5 595.7 L148.0 595.5 L149.5 595.3 L151.0 595.0 L152.5 594.8 L154.0 594.4 L155.5 594.0 L157.0 593.5 L158.5 592.9 L160.0 592.3 L161.9 591.7 L163.8 591.0 L165.8 590.5 L167.7 589.9 L169.6 589.3 L171.5 588.7 L173.2 588.1 L174.9 587.6 L176.6 587.0 L178.3 586.4 L180.0 585.7 L181.7 584.8 L183.3 583.7 L184.9 582.7 L186.6 582.0 L188.1 581.8 L189.5 581.6 L191.0 581.4 L192.8 581.0 L194.7 580.6 L196.5 580.2 L198.3 579.7 L200.1 579.3 L202.0 578.8 L203.8 578.4 L205.6 578.0 L207.4 577.6 L209.2 577.2 L211.0 576.9 L212.8 576.5 L214.6 576.2 L216.4 575.8 L218.2 575.5 L220.0 575.2 L221.8 575.0 L223.6 574.7 L225.4 574.4 L227.2 574.1 L229.0 573.7 L230.8 573.4 L232.5 573.1 L234.3 572.8 L236.1 572.5 L238.1 572.2 L240.1 571.9 L242.1 571.6 L244.0 571.3 L246.0 571.1 L248.0 570.8 L250.0 570.5 L251.8 570.3 L253.6 570.1 L255.4 569.9 L257.2 569.7 L259.0 569.5 L260.8 569.2 L262.6 568.9 L264.4 568.6 L266.1 568.3 L267.9 567.9 L269.7 567.6 L271.5 567.4 L273.3 567.2 L275.1 567.1 L276.9 567.0 L278.7 566.9 L280.5 566.8 L282.3 566.6 L284.1 566.5 L285.9 566.4 L287.6 566.2 L289.4 566.1 L291.2 565.9 L293.0 565.7 L294.8 565.6 L296.6 565.4 L298.4 565.2 L300.2 565.0 L302.0 564.7 L303.8 564.4 L305.4 564.0 L307.1 563.5 L308.7 563.0 L310.3 562.6 L312.1 562.3 L314.0 562.1 L315.8 561.8 L317.6 561.6 L319.5 561.4 L321.3 561.3 L323.2 561.2 L325.0 561.1 L326.9 561.1 L328.9 561.1 L330.8 561.1 L332.8 561.1 L334.7 561.1 L336.1 560.8 L337.6 560.2 L339.0 559.8 L340.9 559.6 L342.9 559.4 L344.8 559.3 L346.7 559.2 L348.7 559.1 L350.6 558.9 L352.6 558.8 L354.5 558.6 L356.4 558.5 L358.4 558.3 L360.3 558.2 L362.2 558.1 L364.2 557.9 L366.1 557.8 L368.1 557.6 L369.5 557.4 L370.9 557.2 L372.4 557.0 L374.3 556.9 L376.2 556.7 L378.2 556.6 L380.1 556.5 L382.1 556.3 L383.7 555.9 L385.3 555.5 L387.1 555.4 L388.9 555.3 L390.7 555.3 L392.5 555.2 L394.3 555.1 L396.0 555.0 L397.8 554.8 L399.6 554.5 L401.4 554.3 L403.2 554.1 L405.0 554.1 L406.7 554.1 L408.3 554.1 L410.0 554.2 L411.8 553.9 L413.6 553.4 L415.4 552.9 L417.3 552.4 L419.2 551.8 L421.1 551.3 L423.0 550.7 L424.9 550.3 L426.9 549.8 L428.9 549.4 L430.8 548.9 L432.7 548.3 L434.6 547.7 L436.6 547.1 L438.5 546.6 L440.4 546.1 L442.2 545.8 L444.1 545.4 L446.0 545.1 L447.9 544.7 L449.9 544.4 L451.9 544.2 L453.8 543.9 L455.4 543.7 L456.9 543.5 L458.4 543.4 L460.0 543.1 L461.8 542.9 L463.5 542.5 L465.3 542.2 L467.0 541.8 L468.8 541.4 L470.5 541.1 L472.3 540.9 L474.2 540.7 L476.0 540.5 L477.9 540.3 L479.7 540.1 L481.6 540.0 L483.4 539.8 L485.2 539.7 L487.1 539.5 L488.9 539.4 L490.8 539.2 L492.7 539.1 L494.5 539.0 L496.4 538.9 L498.2 538.8 L500.1 538.7 L501.9 538.5 L503.8 538.4 L505.6 538.3 L507.4 538.1 L509.3 537.9 L511.1 537.7 L513.0 537.4 L514.8 537.0 L516.7 536.6 L518.5 536.1 L520.3 535.6 L522.2 535.1 L524.0 534.6 L525.9 534.0 L527.7 533.6 L529.5 533.1 L531.2 532.6 L533.0 532.1 L534.7 531.6 L536.5 531.1 L538.2 530.6 L540.0 530.1 L541.7 529.7 L543.5 529.2 L545.2 528.7 L546.9 528.2 L548.7 527.7 L550.4 527.1 L552.1 526.5 L553.8 525.9 L555.6 525.2 L557.4 524.5 L559.2 523.7 L561.0 523.0 L562.7 522.3 L564.5 521.7 L566.3 521.1 L568.0 520.7 L569.8 520.4 L571.5 520.1 L573.2 519.7 L574.9 519.2 L576.5 518.7 L578.2 518.1 L579.9 517.5 L581.5 516.9 L583.4 516.1 L585.2 515.3 L587.1 514.4 L588.9 513.5 L590.7 512.5 L592.6 511.7 L594.5 510.7 L596.5 509.8 L598.4 508.9 L600.3 507.9 L602.3 506.9 L604.2 505.8 L606.2 504.7 L608.1 503.6 L610.0 502.4 L612.0 501.2 L613.5 500.3 L615.0 499.4 L617.0 498.3 L618.9 497.1 L620.9 496.0 L622.9 494.9 L624.8 493.8 L626.8 492.7 L628.8 491.6 L630.7 490.6 L632.7 489.7 L634.5 489.0 L636.2 488.3 L638.0 487.6 L639.8 487.0 L641.5 486.3 L643.3 485.7 L645.1 485.0 L646.9 484.3 L648.6 483.5 L650.4 482.6 L652.2 481.7 L653.9 480.8 L655.7 479.9 L657.5 479.0 L659.2 478.2 L661.0 477.4 L662.8 476.7 L664.6 476.0 L666.3 475.3 L668.1 474.6 L669.9 473.8 L671.6 473.1 L673.4 472.3 L675.2 471.5 L676.9 470.8 L678.7 470.1 L680.5 469.6 L682.3 469.1 L684.1 468.8 L685.9 468.5 L687.7 468.2 L689.5 467.9 L691.4 467.7 L693.2 467.5 L695.0 467.3 L696.9 467.1 L698.8 466.8 L700.6 466.6 L702.5 466.3 L704.4 466.1 L706.2 466.0 L708.1 465.9 L710.0 465.8 L711.9 465.8 L713.7 465.8 L715.6 465.8 L717.4 465.8 L719.3 465.8 L721.2 465.9 L723.0 466.1 L724.9 466.3 L726.7 466.6 L728.6 466.9 L730.4 467.2 L732.3 467.5 L734.1 467.7 L736.0 467.9 L737.8 468.1 L739.7 468.3 L741.5 468.5 L743.3 468.6 L745.2 468.8 L747.0 469.0 L748.9 469.2 L750.7 469.4 L752.6 469.6 L754.4 469.8 L756.2 470.0 L758.1 470.2 L760.0 470.4 L761.8 470.5 L763.7 470.7 L765.5 470.9 L767.4 471.1 L769.2 471.3 L771.0 471.5 L772.9 471.7 L774.7 471.8 L776.6 472.0 L778.4 472.2 L780.2 472.3 L782.1 472.5 L783.9 472.7 L785.8 472.9 L787.6 473.2 L789.5 473.4 L791.5 473.7 L793.4 474.1 L795.3 474.5 L797.3 474.8 L799.2 475.2 L801.1 475.6 L802.9 476.0 L804.8 476.4 L806.6 476.8 L808.5 477.2 L810.3 477.7 L812.2 478.2 L814.0 478.8 L815.9 479.3 L817.7 479.7 L819.5 480.0 L821.4 480.3 L823.2 480.5 L825.1 480.7 L826.9 481.0 L828.8 481.2 L830.6 481.4 L832.5 481.6 L834.3 481.8 L836.2 481.9 L838.0 482.1 L839.9 482.2 L841.7 482.3 L843.6 482.4 L845.4 482.5 L847.2 482.8 L849.1 483.1 L850.9 483.4 L852.8 483.6 L854.6 483.7 L856.4 483.7 L858.2 483.7 L860.0 483.7 L861.8 483.9 L863.7 484.2 L865.5 484.7 L867.4 485.0 L869.1 485.1 L870.8 485.2 L872.5 485.3 L874.2 485.4 L875.9 485.5 L877.5 485.6 L879.4 485.9 L881.2 486.2 L883.1 486.5 L884.9 486.8 L886.8 487.1 L888.6 487.3 L890.5 487.6 L892.3 487.8 L894.2 488.0 L896.0 488.2 L897.9 488.4 L899.7 488.6 L901.6 488.7 L903.4 488.9 L905.2 489.1 L906.9 489.2 L908.6 489.4 L910.3 489.5 L912.0 489.6 L913.7 489.8 L915.4 489.9 L917.2 490.0 L919.1 490.2 L920.9 490.4 L922.8 490.5 L924.6 490.7 L926.5 490.8 L928.3 491.0 L930.2 491.1 L932.0 491.2 L933.9 491.3 L935.8 491.3 L937.7 491.3 L939.6 491.3 L941.6 491.3 L943.5 491.3 L945.4 491.3 L947.3 491.3 L949.2 491.3 L951.2 491.3 L953.1 491.3 L955.0 491.3 L957.0 491.2 L959.0 490.8 L961.0 490.3 L963.0 489.7 L965.0 489.3 L967.0 488.8 L969.0 488.3 L971.0 487.8 L973.0 487.3 L975.0 486.9 L977.0 486.5 L979.0 486.1 L981.0 485.7 L983.0 485.4 L985.0 485.1 L987.0 484.9 L989.0 484.7 L991.0 484.5 L993.0 484.3 L995.0 484.1 L997.0 483.9 L999.0 483.7 L1001.0 483.5 L1003.0 483.3 L1005.0 483.1 L1007.0 482.8 L1009.0 482.4 L1011.0 481.9 L1013.0 481.5 L1015.0 481.0 L1017.0 480.6 L1019.0 480.3 L1021.0 479.9 L1023.0 479.5 L1025.0 479.0 L1027.0 478.3 L1029.0 478.3 L1031.0 478.3 L1033.0 478.3 L1035.0 478.3 L1036.5 478.5 L1038.0 478.8 L1039.9 478.8 L1041.8 478.8 L1043.6 478.8 L1045.5 478.8 L1047.4 478.8 L1049.2 478.8 L1051.1 478.8 L1053.0 478.8" stroke="#ff00ff" fill="none" stroke-width="1" shape-rendering="crispEdges"/>
<path d="M2.0 595.7 L3.8 595.7 L5.6 595.6 L7.4 595.5 L9.2 595.4 L11.0 595.3 L12.8 594.9 L14.7 594.4 L16.5 594.0 L18.3 593.9 L20.2 593.8 L22.0 593.7 L23.9 593.6 L25.9 593.5 L27.8 593.4 L29.7 593.3 L31.6 593.2 L33.6 593.2 L35.5 593.1 L37.4 593.1 L39.3 593.1 L41.2 593.0 L43.0 593.0 L44.9 593.0 L46.8 593.0 L48.7 592.9 L50.6 592.9 L52.5 592.9 L54.3 592.9 L56.2 592.9 L58.1 592.9 L60.0 592.9 L61.9 592.9 L63.8 592.9 L65.7 592.9 L67.6 592.9 L69.4 592.9 L71.3 592.9 L73.2 592.9 L75.1 592.9 L77.0 592.9 L78.7 593.2 L80.3 593.8 L82.0 594.4 L83.9 594.8 L85.8 595.3 L87.7 595.7 L88.8 596.1 L90.0 596.4 L91.2 596.8 L92.5 597.0 L94.5 597.0 L96.4 597.0 L98.4 597.0 L100.4 597.0 L102.3 597.0 L104.3 597.0 L106.2 597.0 L108.2 597.0 L110.2 597.0 L112.1 597.0 L114.1 597.0 L116.1 597.0 L118.0 597.0 L120.0 597.0 L122.0 596.4 L123.7 596.4 L125.3 596.4 L127.0 596.4 L128.5 596.0 L130.0 595.5 L131.7 595.1 L133.4 594.7 L134.9 594.2 L136.4 593.6 L138.0 593.0 L139.6 592.4 L141.2 591.9 L142.7 591.5 L144.2 591.1 L145.8 590.7 L147.4 590.2 L148.9 589.8 L150.4 589.4 L152.0 589.0 L153.6 588.5 L155.1 588.1 L156.6 587.6 L158.2 587.0 L159.5 586.1 L160.8 585.1 L162.6 584.1 L164.4 583.3 L166.2 582.6 L167.9 581.9 L169.7 581.1 L171.5 580.3 L173.1 579.4 L174.8 578.3 L176.4 577.3 L178.0 576.2 L179.7 574.8 L181.4 573.4 L183.2 571.9 L184.9 570.6 L186.6 569.6 L188.2 568.9 L189.8 568.3 L191.4 567.8 L193.0 567.3 L194.8 566.8 L196.6 566.2 L198.4 565.7 L200.2 565.2 L202.0 564.7 L203.8 564.4 L205.6 564.1 L207.4 563.8 L209.2 563.6 L211.0 563.4 L212.8 563.1 L214.6 562.9 L216.4 562.5 L218.2 562.2 L220.0 561.8 L221.8 561.4 L223.6 561.0 L225.4 560.7 L227.2 560.4 L229.0 560.1 L230.8 559.9 L232.5 559.7 L234.3 559.5 L236.1 559.2 L238.1 559.0 L240.1 558.7 L242.1 558.4 L244.0 558.1 L246.0 557.9 L248.0 557.8 L250.0 557.7 L251.8 557.7 L253.6 557.7 L255.4 557.7 L257.2 557.7 L259.0 557.7 L260.8 557.7 L262.5 557.6 L264.3 557.3 L266.0 557.0 L267.8 556.7 L269.7 556.3 L271.5 556.0 L273.3 555.8 L275.1 555.7 L276.9 555.6 L278.7 555.5 L280.5 555.3 L282.3 555.2 L284.0 555.0 L285.8 554.8 L287.5 554.5 L289.3 554.3 L291.0 554.1 L292.8 553.9 L294.7 553.8 L296.5 553.6 L298.3 553.5 L300.1 553.3 L302.0 553.2 L303.8 553.0 L305.6 552.8 L307.4 552.5 L309.2 552.3 L311.0 552.0 L312.8 551.8 L314.6 551.8 L316.3 551.8 L318.1 551.8 L319.8 551.8 L321.5 551.8 L323.3 551.8 L325.0 551.8 L326.9 551.7 L328.8 551.5 L330.7 551.2 L332.5 551.0 L334.5 550.7 L336.4 550.5 L338.3 550.2 L340.3 550.0 L342.2 549.9 L344.1 549.7 L345.9 549.7 L347.7 549.6 L349.5 549.5 L351.4 549.4 L353.2 549.4 L355.0 549.3 L356.9 549.3 L358.7 549.2 L360.5 549.1 L362.5 549.0 L364.5 548.9 L366.5 548.8 L368.5 548.7 L370.5 548.6 L372.5 548.5 L374.5 548.4 L376.5 548.3 L378.5 548.2 L380.5 548.1 L382.5 548.0 L384.5 547.9 L386.5 547.8 L388.5 547.6 L390.3 547.5 L392.1 547.4 L393.9 547.3 L395.7 547.2 L397.5 547.1 L399.3 546.9 L401.2 546.7 L403.1 546.4 L405.0 546.2 L406.8 545.9 L408.6 545.7 L410.5 545.5 L412.3 545.2 L414.1 544.8 L415.9 544.2 L417.6 543.5 L419.4 542.8 L421.2 542.1 L423.0 541.5 L424.9 540.9 L426.9 540.4 L428.9 539.8 L430.8 539.2 L432.3 538.6 L433.9 537.9 L435.4 537.3 L437.2 536.7 L439.1 536.1 L440.9 535.5 L442.8 535.0 L444.6 534.4 L446.5 533.9 L448.3 533.4 L450.2 533.0 L452.0 532.6 L453.9 532.3 L455.7 532.0 L457.6 531.8 L459.4 531.5 L461.3 531.4 L463.1 531.2 L464.9 531.0 L466.8 530.8 L468.6 530.6 L470.5 530.4 L472.3 530.1 L474.1 529.5 L476.0 529.1 L478.0 529.1 L479.9 529.1 L481.9 529.1 L483.8 529.1 L485.8 529.1 L487.8 529.1 L489.7 529.1 L491.7 529.1 L493.6 529.1 L495.6 529.1 L497.5 529.1 L499.5 529.1 L501.5 529.1 L503.4 529.1 L505.4 529.1 L507.3 529.1 L509.3 529.1 L511.1 528.9 L513.0 528.4 L514.8 527.9 L516.6 527.3 L518.5 526.8 L520.3 526.2 L522.2 525.5 L524.0 524.8 L525.9 524.1 L527.7 523.4 L529.5 522.7 L531.2 521.9 L533.0 521.0 L534.7 520.1 L536.5 519.3 L538.2 518.5 L540.0 517.8 L541.7 517.3 L543.5 516.9 L545.2 516.4 L546.9 515.9 L548.7 515.3 L550.4 514.7 L552.1 513.9 L553.8 513.1 L555.6 512.1 L557.3 510.9 L559.0 509.6 L560.8 508.3 L562.5 506.9 L564.2 505.4 L566.0 504.1 L567.7 503.6 L569.1 503.6 L570.4 503.7 L571.8 503.8 L573.7 503.5 L575.5 502.9 L577.4 502.2 L579.1 501.4 L580.8 500.5 L582.6 499.4 L584.3 498.4 L586.0 497.3 L587.6 496.2 L589.3 495.0 L590.9 493.9 L592.6 493.0 L594.3 492.2 L596.1 491.5 L597.8 490.7 L599.5 489.9 L601.4 488.5 L603.2 486.8 L605.1 485.1 L606.8 483.5 L608.5 481.8 L610.2 480.1 L612.0 478.5 L613.6 476.9 L615.2 475.4 L616.8 473.8 L618.4 472.3 L620.0 470.9 L621.8 469.3 L623.7 467.7 L625.5 466.1 L627.3 464.6 L629.2 463.3 L631.0 462.2 L632.8 461.3 L634.6 460.5 L636.4 459.9 L638.2 459.2 L640.0 458.6 L641.8 458.1 L643.6 457.6 L645.4 457.2 L647.2 456.7 L649.0 456.1 L650.9 455.4 L652.8 454.5 L654.7 453.6 L656.6 452.7 L658.5 451.7 L660.3 450.8 L662.2 449.7 L664.0 448.7 L665.9 447.6 L667.7 446.7 L669.5 445.7 L671.4 444.8 L673.2 443.9 L675.1 443.0 L676.9 442.2 L678.7 441.3 L680.6 440.5 L682.4 440.1 L684.3 440.2 L686.1 440.6 L688.0 441.0 L689.8 441.5 L691.7 441.9 L693.5 442.2 L695.4 442.4 L697.2 442.7 L699.0 442.9 L700.9 443.1 L702.7 443.3 L704.5 443.4 L706.4 443.5 L708.2 443.7 L710.1 443.9 L711.9 444.1 L713.8 444.4 L715.6 445.0 L717.5 446.1 L719.4 447.4 L721.2 448.5 L723.1 449.5 L724.9 450.5 L726.8 451.4 L728.6 452.4 L730.4 453.2 L732.3 454.0 L734.1 454.6 L736.0 455.2 L737.8 455.8 L739.6 456.3 L741.5 456.8 L743.3 457.4 L745.1 458.0 L747.0 458.6 L748.8 459.3 L750.7 459.9 L752.5 460.5 L754.4 461.2 L756.2 461.8 L758.1 462.5 L760.0 463.1 L761.8 463.8 L763.6 464.4 L765.5 465.0 L767.4 465.7 L769.2 466.2 L771.0 466.8 L772.9 467.4 L774.7 467.9 L776.5 468.4 L778.4 468.9 L780.2 469.4 L782.2 469.9 L784.1 470.3 L786.1 470.8 L788.0 471.2 L790.0 471.8 L791.8 472.4 L793.7 473.1 L795.5 473.8 L797.4 474.6 L799.2 475.3 L801.1 476.0 L802.9 476.6 L804.8 477.3 L806.6 478.0 L808.5 478.8 L810.3 479.7 L812.2 480.8 L814.0 481.9 L815.9 482.8 L817.7 483.5 L819.5 483.9 L821.4 484.3 L823.2 484.6 L825.1 484.9 L826.9 485.1 L828.8 485.2 L830.6 485.3 L832.5 485.4 L834.3 485.5 L836.2 485.7 L838.0 486.0 L839.9 486.4 L841.7 486.8 L843.6 487.2 L845.4 487.6 L847.2 487.9 L849.1 488.2 L850.9 488.5 L852.8 488.7 L854.6 488.8 L856.4 488.9 L858.2 489.0 L860.0 489.1 L861.8 489.2 L863.7 489.4 L865.5 489.6 L867.4 489.8 L869.2 490.0 L871.1 490.2 L872.9 490.5 L874.8 490.7 L876.6 491.0 L878.5 491.3 L880.3 491.7 L882.2 492.1 L884.0 492.6 L885.9 493.1 L887.7 493.5 L889.5 493.8 L891.4 494.1 L893.2 494.3 L895.1 494.6 L896.9 494.8 L898.8 495.0 L900.6 495.2 L902.5 495.3 L904.3 495.5 L906.2 495.6 L908.0 495.7 L909.9 495.8 L911.7 495.8 L913.6 495.8 L915.4 495.9 L917.2 495.9 L919.1 495.9 L920.9 495.9 L922.8 496.0 L924.6 496.0 L926.5 496.2 L928.3 496.4 L930.2 496.7 L932.0 497.0 L933.9 497.2 L935.7 497.3 L937.6 497.3 L939.4 497.2 L941.3 497.2 L943.1 497.1 L944.9 497.0 L946.8 496.7 L948.6 496.3 L950.5 495.8 L952.3 495.4 L954.3 495.0 L956.2 494.7 L958.1 494.3 L960.0 493.8 L961.5 493.1 L963.0 492.3 L965.0 491.5 L967.0 490.7 L969.0 489.9 L971.0 489.1 L972.9 488.4 L974.8 487.8 L976.6 487.1 L978.5 486.5 L980.4 485.9 L982.2 485.4 L984.1 484.9 L986.0 484.4 L988.0 483.9 L990.0 483.4 L992.0 482.8 L994.0 482.3 L995.9 481.7 L997.8 481.0 L999.6 480.3 L1001.5 479.7 L1003.4 479.0 L1005.2 478.3 L1007.1 477.6 L1009.0 477.0 L1011.0 476.4 L1013.0 475.9 L1015.0 475.4 L1017.0 474.9 L1018.9 474.2 L1020.8 473.5 L1022.7 472.9 L1024.6 472.5 L1026.4 472.2 L1028.3 472.0 L1030.2 471.8 L1032.0 471.8 L1034.0 472.0 L1036.0 472.5 L1038.0 473.0 L1040.0 473.5 L1041.9 473.8 L1043.8 474.1 L1045.8 474.4 L1047.7 474.7 L1049.3 474.8 L1050.8 475.0 L1052.4 475.1 L1054.0 475.2" stroke="#ffffff" fill="none" stroke-width="2" shape-rendering="crispEdges"/></g>
<path d="M969 469.5 L974 476 H970 V482 H968 V476 H964 Z" fill="#ff0000"/>
<path d="M1071 68.5H1076M1071 94.5H1073M1071 120.5H1076M1071 146.5H1073M1071 172.5H1076M1071 197.5H1073M1071 223.5H1076M1071 249.5H1073M1071 275.5H1076M1071 301.5H1073M1071 327.5H1076M1071 352.5H1073M1071 378.5H1076M1071 414.5H1076M1071 432.5H1073M1071 450.5H1076M1071 468.5H1073M1071 485.5H1076M1071 503.5H1073M1071 521.5H1076M1071 538.5H1073M1071 556.5H1076M1071 574.5H1073M1071 591.5H1076" stroke="#c00000" shape-rendering="crispEdges"/>
<path d="M0 630.5H978M0 646.5H978M68.5 631V646M166.5 631V646M255.5 631V646M350.5 631V646M458.5 631V646M558.5 631V646M742.5 631V646M836.5 631V646M944.5 631V646M92.5 631V633M117.5 631V633M142.5 631V633M188.5 631V633M211.5 631V633M234.5 631V633M280.5 631V633M304.5 631V633M327.5 631V633M377.5 631V633M404.5 631V633M432.5 631V633M484.5 631V633M508.5 631V633M532.5 631V633M584.5 631V633M609.5 631V633M722.5 631V633M766.5 631V633M789.5 631V633M813.5 631V633M862.5 631V633M891.5 631V633M918.5 631V633M969.5 631V633M42.5 647V650M73.5 647V650M115.5 647V650M144.5 647V650M177.5 647V650M207.5 647V650M242.5 647V650M283.5 647V650M309.5 647V650M332.5 647V650M365.5 647V650M391.5 647V650M422.5 647V650M481.5 647V650M508.5 647V650M536.5 647V650M568.5 647V650M600.5 647V650M629.5 647V650M663.5 647V650M696.5 647V650M736.5 647V650M766.5 647V650M808.5 647V650M839.5 647V650M871.5 647V650" stroke="#c00000" shape-rendering="crispEdges"/>
<rect x="5.5" y="3.5" width="12" height="10" rx="2" fill="none" stroke="#8a8a8a" stroke-width="1"/>
<rect x="12.5" y="5" width="3" height="7" fill="#8a8a8a"/>
<path d="M1042.5 24.5 L1047.5 29.5 L1042.5 34.5 L1037.5 29.5 Z" fill="none" stroke="#8a8a8a"/>
<rect x="1055.5" y="24.5" width="11" height="10" rx="2" fill="none" stroke="#8a8a8a"/>
<rect x="1062" y="26" width="3" height="7" fill="#8a8a8a"/>
<circle cx="134" cy="29" r="6" fill="#6e6e6e"/>
<path d="M131.0 27.5 L134.0 30.5 L137.0 27.5" fill="none" stroke="#111" stroke-width="1.3"/>
<circle cx="8" cy="405" r="6" fill="#6e6e6e"/>
<path d="M5.0 403.5 L8.0 406.5 L11.0 403.5" fill="none" stroke="#111" stroke-width="1.3"/>
</svg>
<div class="tb" style="left:27.6px;color:#d0d0d0">分时</div>
<div class="tb" style="left:61.6px;color:#d0d0d0">1分钟</div>
<div class="tb" style="left:99.8px;color:#d0d0d0">5分钟</div>
<div class="tb" style="left:139.3px;color:#d0d0d0">15分钟</div>
<div class="tb" style="left:185.6px;color:#d0d0d0">30分钟</div>
<div class="tb" style="left:231.5px;color:#d0d0d0">60分钟</div>
<div class="tb" style="left:278.3px;color:#54ffff">日线</div>
<div class="tb" style="left:311.4px;color:#d0d0d0">周线</div>
<div class="tb" style="left:345.0px;color:#d0d0d0">月线</div>
<div class="tb" style="left:378.0px;color:#d0d0d0">多周期</div>
<div class="tb" style="left:422.7px;color:#d0d0d0">更多 &gt;</div>
<div class="tb" style="left:806px;width:35px;text-align:center">复权</div>
<div class="tb" style="left:841px;width:34px;text-align:center">叠加</div>
<div class="tb" style="left:875px;width:35px;text-align:center">多股</div>
<div class="tb" style="left:910px;width:35px;text-align:center">统计</div>
<div class="tb" style="left:945px;width:35px;text-align:center">画线</div>
<div class="tb" style="left:980px;width:35px;text-align:center">F10</div>
<div class="tb" style="left:1015px;width:35px;text-align:center">标记</div>
<div class="tb" style="left:1050px;width:35px;text-align:center">+自选</div>
<div class="tb" style="left:1085px;width:37px;text-align:center">返回</div>
<div class="t" style="left:2px;top:22px;color:#d0d0d0">北京利尔(日线.前复权)</div>
<div class="t" style="left:145px;top:22px;color:#ffffff;font-size:11.5px">MA5: 8.28</div>
<div class="t" style="left:202.5px;top:22px;color:#ff00ff;font-size:11.5px">MA10: 8.17</div>
<div class="t" style="left:267.6px;top:22px;color:#ffff00;font-size:11.5px">MA20: 8.06</div>
<div class="t" style="left:332.6px;top:22px;color:#58c8f8;font-size:11.5px">MA60: 7.91</div>
<div class="t" style="left:17.7px;top:398px;color:#d0d0d0">股朋指标网</div>
<div class="t" style="left:84px;top:398px;color:#ffffff;font-size:11.5px">EMA30: 8.28</div>
<div class="t" style="left:157px;top:398px;color:#ff00ff;font-size:11.5px">EMA60: 8.17</div>
<div class="t" style="left:230px;top:398px;color:#ffff00;font-size:11.5px">EMA90: 8.06</div>
<div class="t" style="left:303px;top:398px;color:#58c8f8;font-size:11.5px">EMA120: 7.91</div>
<div class="t" style="left:382.7px;top:398px;color:#0000ff;font-size:11.5px">EMA250: 7.09</div>
<div class="ax" style="top:62.8px">10.00</div>
<div class="ax" style="top:88.6px">9.50</div>
<div class="ax" style="top:114.4px">9.00</div>
<div class="ax" style="top:140.3px">8.50</div>
<div class="ax" style="top:166.1px">8.00</div>
<div class="ax" style="top:191.9px">7.50</div>
<div class="ax" style="top:217.8px">7.00</div>
<div class="ax" style="top:243.6px">6.50</div>
<div class="ax" style="top:269.4px">6.00</div>
<div class="ax" style="top:295.2px">5.50</div>
<div class="ax" style="top:321.1px">5.00</div>
<div class="ax" style="top:346.9px">4.50</div>
<div class="ax" style="top:372.7px">4.00</div>
<div class="ax" style="top:410.0px">10.00</div>
<div class="ax" style="top:480.7px">8.00</div>
<div class="ax" style="top:516.1px">7.00</div>
<div class="ax" style="top:551.4px">6.00</div>
<div class="ax" style="top:586.8px">5.00</div>
<div style="position:absolute;left:1071px;top:439px;width:49px;height:16px;background:#000090;border-top:1px solid #c00000;border-bottom:1px solid #c00000;box-sizing:border-box"></div>
<div class="t" style="left:1072px;top:440px;color:#d8d8d8;font-size:12px">8.86</div>
<div class="xl" style="left:2.0px">2025年</div>
<div class="xl" style="left:69.0px">4</div>
<div class="xl" style="left:167.5px">5</div>
<div class="xl" style="left:256.5px">6</div>
<div class="xl" style="left:351.5px">7</div>
<div class="xl" style="left:459.5px">8</div>
<div class="xl" style="left:559.0px">9</div>
<div class="xl" style="left:743.0px">11</div>
<div class="xl" style="left:837.0px">12</div>
<div class="xl" style="left:945.5px">1</div>
<div style="position:absolute;left:629px;top:631px;width:77px;height:15px;background:#000090"></div>
<div class="t" style="left:630px;top:631.5px;color:#d8d8d8">2025/09/22/—</div>
<div style="position:absolute;left:977px;top:599px;width:153px;height:51px;background:#000"></div>
<div class="t" style="left:998px;top:607px;color:#fff;font-size:21px;line-height:24px;font-weight:bold">乐淘公式网</div>
<div class="t" style="left:1001px;top:633px;color:#fff;font-size:15px;line-height:16px;font-weight:bold;font-family:'Liberation Serif',serif">www.60lt.com</div>
<div style="position:absolute;left:1122px;top:0;width:8px;height:599px;overflow:hidden">
<div style="position:absolute;left:0px;top:28px;width:20px;height:14px;transform-origin:0 0;transform:rotate(90deg) translate(0,-13px);overflow:hidden;font-size:13px;line-height:14px;color:#b8b8b8;white-space:nowrap;letter-spacing:4px">察</div>
<div style="position:absolute;left:0px;top:48px;width:91px;height:14px;transform-origin:0 0;transform:rotate(90deg) translate(0,-13px);overflow:hidden;font-size:13px;line-height:14px;color:#b8b8b8;white-space:nowrap;letter-spacing:4px">察察察察察</div>
<div style="position:absolute;left:0px;top:139px;width:102px;height:14px;transform-origin:0 0;transform:rotate(90deg) translate(0,-13px);overflow:hidden;font-size:13px;line-height:14px;color:#b8b8b8;white-space:nowrap;letter-spacing:4px">察察察察察察</div>
<div style="position:absolute;left:0px;top:241px;width:98px;height:14px;transform-origin:0 0;transform:rotate(90deg) translate(0,-13px);overflow:hidden;font-size:13px;line-height:14px;color:#b8b8b8;white-space:nowrap;letter-spacing:4px">形态分析外</div>
<div style="position:absolute;left:0px;top:339px;width:60px;height:14px;transform-origin:0 0;transform:rotate(90deg) translate(0,-13px);overflow:hidden;font-size:13px;line-height:14px;color:#b8b8b8;white-space:nowrap;letter-spacing:4px">技术指</div>
<div style="position:absolute;left:1px;top:400px;font-size:12px;line-height:14px;color:#ffff00">自</div>
<div style="position:absolute;left:1px;top:421px;font-size:12px;line-height:14px;color:#d8d8d8">文</div>
<div style="position:absolute;left:1px;top:431px;font-size:13px;line-height:14px;color:#e0e0e0">1</div>
<div style="position:absolute;left:1px;top:449px;font-size:13px;line-height:14px;color:#e0e0e0">1</div>
<div style="position:absolute;left:1px;top:467px;font-size:13px;line-height:14px;color:#e0e0e0">1</div>
<div style="position:absolute;left:1px;top:485px;font-size:13px;line-height:14px;color:#e0e0e0">1</div>
<div style="position:absolute;left:1px;top:503px;font-size:13px;line-height:14px;color:#e0e0e0">1</div>
<div style="position:absolute;left:1px;top:522px;font-size:13px;line-height:14px;color:#e0e0e0">1</div>
<div style="position:absolute;left:1px;top:540px;font-size:13px;line-height:14px;color:#e0e0e0">1</div>
<div style="position:absolute;left:1px;top:558px;font-size:13px;line-height:14px;color:#e0e0e0">1</div>
<div style="position:absolute;left:1px;top:576px;font-size:13px;line-height:14px;color:#e0e0e0">1</div></div>
<div style="position:absolute;left:5px;top:645px;font-size:12px;line-height:14px;color:#d8d8d8">总计 . 人</div>
</body></html>
